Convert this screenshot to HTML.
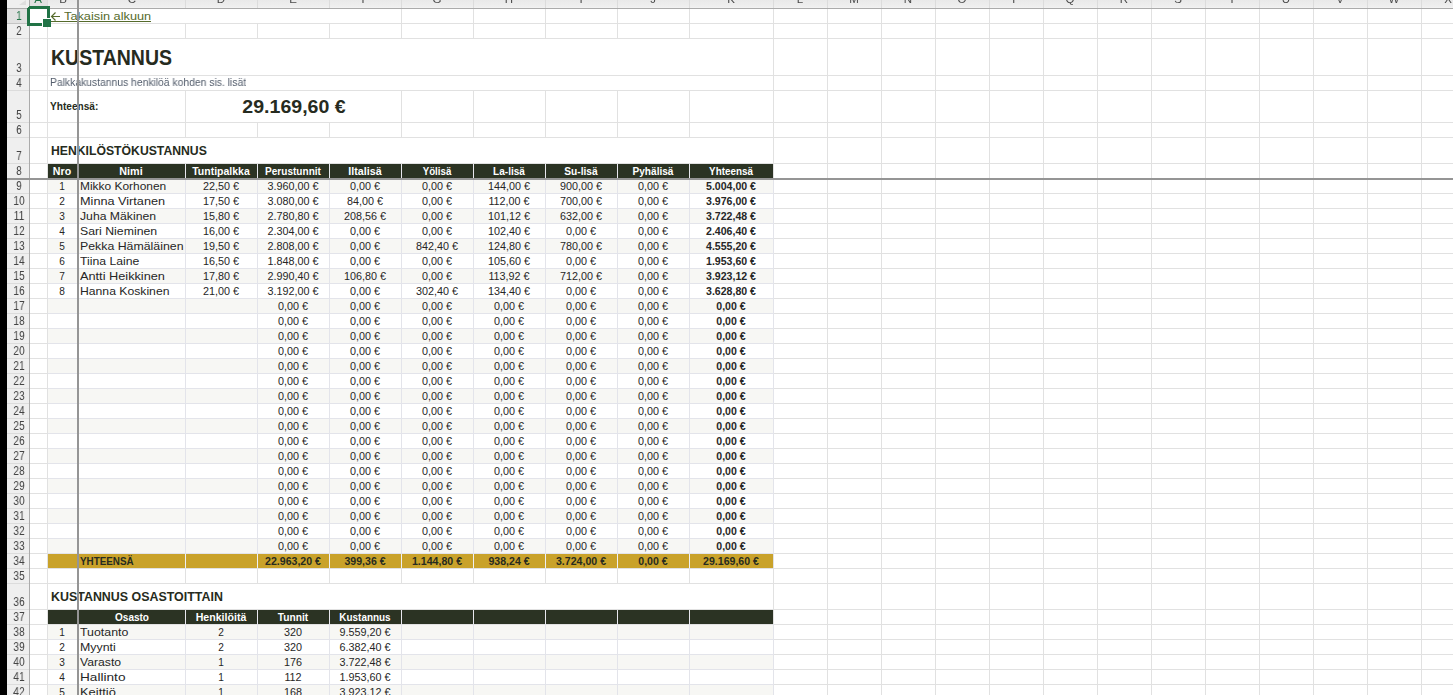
<!DOCTYPE html>
<html><head><meta charset="utf-8"><style>
html,body{margin:0;padding:0;}
body{width:1453px;height:695px;overflow:hidden;position:relative;background:#ffffff;font-family:"Liberation Sans",sans-serif;}
body>div{position:absolute;}
.t{white-space:nowrap;line-height:normal;}
</style></head><body>
<div style="left:47px;top:9px;width:1px;height:686px;background:#e1e1e1;"></div>
<div style="left:185px;top:9px;width:1px;height:686px;background:#e1e1e1;"></div>
<div style="left:257px;top:9px;width:1px;height:686px;background:#e1e1e1;"></div>
<div style="left:329px;top:9px;width:1px;height:686px;background:#e1e1e1;"></div>
<div style="left:401px;top:9px;width:1px;height:686px;background:#e1e1e1;"></div>
<div style="left:473px;top:9px;width:1px;height:686px;background:#e1e1e1;"></div>
<div style="left:545px;top:9px;width:1px;height:686px;background:#e1e1e1;"></div>
<div style="left:617px;top:9px;width:1px;height:686px;background:#e1e1e1;"></div>
<div style="left:689px;top:9px;width:1px;height:686px;background:#e1e1e1;"></div>
<div style="left:773px;top:9px;width:1px;height:686px;background:#e1e1e1;"></div>
<div style="left:827px;top:9px;width:1px;height:686px;background:#e1e1e1;"></div>
<div style="left:881px;top:9px;width:1px;height:686px;background:#e1e1e1;"></div>
<div style="left:935px;top:9px;width:1px;height:686px;background:#e1e1e1;"></div>
<div style="left:989px;top:9px;width:1px;height:686px;background:#e1e1e1;"></div>
<div style="left:1043px;top:9px;width:1px;height:686px;background:#e1e1e1;"></div>
<div style="left:1097px;top:9px;width:1px;height:686px;background:#e1e1e1;"></div>
<div style="left:1151px;top:9px;width:1px;height:686px;background:#e1e1e1;"></div>
<div style="left:1205px;top:9px;width:1px;height:686px;background:#e1e1e1;"></div>
<div style="left:1259px;top:9px;width:1px;height:686px;background:#e1e1e1;"></div>
<div style="left:1313px;top:9px;width:1px;height:686px;background:#e1e1e1;"></div>
<div style="left:1367px;top:9px;width:1px;height:686px;background:#e1e1e1;"></div>
<div style="left:1421px;top:9px;width:1px;height:686px;background:#e1e1e1;"></div>
<div style="left:1475px;top:9px;width:1px;height:686px;background:#e1e1e1;"></div>
<div style="left:30px;top:23px;width:1423px;height:1px;background:#e1e1e1;"></div>
<div style="left:30px;top:38px;width:1423px;height:1px;background:#e1e1e1;"></div>
<div style="left:30px;top:75px;width:1423px;height:1px;background:#e1e1e1;"></div>
<div style="left:30px;top:90px;width:1423px;height:1px;background:#e1e1e1;"></div>
<div style="left:30px;top:122px;width:1423px;height:1px;background:#e1e1e1;"></div>
<div style="left:30px;top:137px;width:1423px;height:1px;background:#e1e1e1;"></div>
<div style="left:30px;top:163px;width:1423px;height:1px;background:#e1e1e1;"></div>
<div style="left:30px;top:193px;width:1423px;height:1px;background:#e1e1e1;"></div>
<div style="left:30px;top:208px;width:1423px;height:1px;background:#e1e1e1;"></div>
<div style="left:30px;top:223px;width:1423px;height:1px;background:#e1e1e1;"></div>
<div style="left:30px;top:238px;width:1423px;height:1px;background:#e1e1e1;"></div>
<div style="left:30px;top:253px;width:1423px;height:1px;background:#e1e1e1;"></div>
<div style="left:30px;top:268px;width:1423px;height:1px;background:#e1e1e1;"></div>
<div style="left:30px;top:283px;width:1423px;height:1px;background:#e1e1e1;"></div>
<div style="left:30px;top:298px;width:1423px;height:1px;background:#e1e1e1;"></div>
<div style="left:30px;top:313px;width:1423px;height:1px;background:#e1e1e1;"></div>
<div style="left:30px;top:328px;width:1423px;height:1px;background:#e1e1e1;"></div>
<div style="left:30px;top:343px;width:1423px;height:1px;background:#e1e1e1;"></div>
<div style="left:30px;top:358px;width:1423px;height:1px;background:#e1e1e1;"></div>
<div style="left:30px;top:373px;width:1423px;height:1px;background:#e1e1e1;"></div>
<div style="left:30px;top:388px;width:1423px;height:1px;background:#e1e1e1;"></div>
<div style="left:30px;top:403px;width:1423px;height:1px;background:#e1e1e1;"></div>
<div style="left:30px;top:418px;width:1423px;height:1px;background:#e1e1e1;"></div>
<div style="left:30px;top:433px;width:1423px;height:1px;background:#e1e1e1;"></div>
<div style="left:30px;top:448px;width:1423px;height:1px;background:#e1e1e1;"></div>
<div style="left:30px;top:463px;width:1423px;height:1px;background:#e1e1e1;"></div>
<div style="left:30px;top:478px;width:1423px;height:1px;background:#e1e1e1;"></div>
<div style="left:30px;top:493px;width:1423px;height:1px;background:#e1e1e1;"></div>
<div style="left:30px;top:508px;width:1423px;height:1px;background:#e1e1e1;"></div>
<div style="left:30px;top:523px;width:1423px;height:1px;background:#e1e1e1;"></div>
<div style="left:30px;top:538px;width:1423px;height:1px;background:#e1e1e1;"></div>
<div style="left:30px;top:553px;width:1423px;height:1px;background:#e1e1e1;"></div>
<div style="left:30px;top:568px;width:1423px;height:1px;background:#e1e1e1;"></div>
<div style="left:30px;top:583px;width:1423px;height:1px;background:#e1e1e1;"></div>
<div style="left:30px;top:609px;width:1423px;height:1px;background:#e1e1e1;"></div>
<div style="left:30px;top:624px;width:1423px;height:1px;background:#e1e1e1;"></div>
<div style="left:30px;top:639px;width:1423px;height:1px;background:#e1e1e1;"></div>
<div style="left:30px;top:654px;width:1423px;height:1px;background:#e1e1e1;"></div>
<div style="left:30px;top:669px;width:1423px;height:1px;background:#e1e1e1;"></div>
<div style="left:30px;top:684px;width:1423px;height:1px;background:#e1e1e1;"></div>
<div style="left:30px;top:699px;width:1423px;height:1px;background:#e1e1e1;"></div>
<div style="left:30px;top:714px;width:1423px;height:1px;background:#e1e1e1;"></div>
<div style="left:48px;top:9px;width:353px;height:14px;background:#ffffff;"></div>
<div style="left:48px;top:39px;width:725px;height:36px;background:#ffffff;"></div>
<div style="left:48px;top:76px;width:725px;height:14px;background:#ffffff;"></div>
<div style="left:48px;top:91px;width:137px;height:31px;background:#ffffff;"></div>
<div style="left:186px;top:91px;width:215px;height:31px;background:#ffffff;"></div>
<div style="left:48px;top:138px;width:725px;height:25px;background:#ffffff;"></div>
<div style="left:48px;top:584px;width:725px;height:25px;background:#ffffff;"></div>
<div style="left:48px;top:164px;width:725px;height:14px;background:#2b3323;"></div>
<div style="left:78px;top:164px;width:1px;height:14px;background:#e8e8ee;"></div>
<div style="left:185px;top:164px;width:1px;height:14px;background:#e8e8ee;"></div>
<div style="left:257px;top:164px;width:1px;height:14px;background:#e8e8ee;"></div>
<div style="left:329px;top:164px;width:1px;height:14px;background:#e8e8ee;"></div>
<div style="left:401px;top:164px;width:1px;height:14px;background:#e8e8ee;"></div>
<div style="left:473px;top:164px;width:1px;height:14px;background:#e8e8ee;"></div>
<div style="left:545px;top:164px;width:1px;height:14px;background:#e8e8ee;"></div>
<div style="left:617px;top:164px;width:1px;height:14px;background:#e8e8ee;"></div>
<div style="left:689px;top:164px;width:1px;height:14px;background:#e8e8ee;"></div>
<div style="left:48px;top:610px;width:725px;height:14px;background:#2b3323;"></div>
<div style="left:78px;top:610px;width:1px;height:14px;background:#e8e8ee;"></div>
<div style="left:185px;top:610px;width:1px;height:14px;background:#e8e8ee;"></div>
<div style="left:257px;top:610px;width:1px;height:14px;background:#e8e8ee;"></div>
<div style="left:329px;top:610px;width:1px;height:14px;background:#e8e8ee;"></div>
<div style="left:401px;top:610px;width:1px;height:14px;background:#e8e8ee;"></div>
<div style="left:473px;top:610px;width:1px;height:14px;background:#e8e8ee;"></div>
<div style="left:545px;top:610px;width:1px;height:14px;background:#e8e8ee;"></div>
<div style="left:617px;top:610px;width:1px;height:14px;background:#e8e8ee;"></div>
<div style="left:689px;top:610px;width:1px;height:14px;background:#e8e8ee;"></div>
<div style="left:48px;top:179px;width:725px;height:14px;background:#f7f7f4;"></div>
<div style="left:185px;top:178px;width:1px;height:16px;background:#e3e4ea;"></div>
<div style="left:257px;top:178px;width:1px;height:16px;background:#e3e4ea;"></div>
<div style="left:329px;top:178px;width:1px;height:16px;background:#e3e4ea;"></div>
<div style="left:401px;top:178px;width:1px;height:16px;background:#e3e4ea;"></div>
<div style="left:473px;top:178px;width:1px;height:16px;background:#e3e4ea;"></div>
<div style="left:545px;top:178px;width:1px;height:16px;background:#e3e4ea;"></div>
<div style="left:617px;top:178px;width:1px;height:16px;background:#e3e4ea;"></div>
<div style="left:689px;top:178px;width:1px;height:16px;background:#e3e4ea;"></div>
<div style="left:773px;top:178px;width:1px;height:16px;background:#e3e4ea;"></div>
<div style="left:48px;top:193px;width:725px;height:1px;background:#e3e4ea;"></div>
<div style="left:48px;top:194px;width:725px;height:14px;background:#ffffff;"></div>
<div style="left:185px;top:193px;width:1px;height:16px;background:#e3e4ea;"></div>
<div style="left:257px;top:193px;width:1px;height:16px;background:#e3e4ea;"></div>
<div style="left:329px;top:193px;width:1px;height:16px;background:#e3e4ea;"></div>
<div style="left:401px;top:193px;width:1px;height:16px;background:#e3e4ea;"></div>
<div style="left:473px;top:193px;width:1px;height:16px;background:#e3e4ea;"></div>
<div style="left:545px;top:193px;width:1px;height:16px;background:#e3e4ea;"></div>
<div style="left:617px;top:193px;width:1px;height:16px;background:#e3e4ea;"></div>
<div style="left:689px;top:193px;width:1px;height:16px;background:#e3e4ea;"></div>
<div style="left:773px;top:193px;width:1px;height:16px;background:#e3e4ea;"></div>
<div style="left:48px;top:208px;width:725px;height:1px;background:#e3e4ea;"></div>
<div style="left:48px;top:209px;width:725px;height:14px;background:#f7f7f4;"></div>
<div style="left:185px;top:208px;width:1px;height:16px;background:#e3e4ea;"></div>
<div style="left:257px;top:208px;width:1px;height:16px;background:#e3e4ea;"></div>
<div style="left:329px;top:208px;width:1px;height:16px;background:#e3e4ea;"></div>
<div style="left:401px;top:208px;width:1px;height:16px;background:#e3e4ea;"></div>
<div style="left:473px;top:208px;width:1px;height:16px;background:#e3e4ea;"></div>
<div style="left:545px;top:208px;width:1px;height:16px;background:#e3e4ea;"></div>
<div style="left:617px;top:208px;width:1px;height:16px;background:#e3e4ea;"></div>
<div style="left:689px;top:208px;width:1px;height:16px;background:#e3e4ea;"></div>
<div style="left:773px;top:208px;width:1px;height:16px;background:#e3e4ea;"></div>
<div style="left:48px;top:223px;width:725px;height:1px;background:#e3e4ea;"></div>
<div style="left:48px;top:224px;width:725px;height:14px;background:#ffffff;"></div>
<div style="left:185px;top:223px;width:1px;height:16px;background:#e3e4ea;"></div>
<div style="left:257px;top:223px;width:1px;height:16px;background:#e3e4ea;"></div>
<div style="left:329px;top:223px;width:1px;height:16px;background:#e3e4ea;"></div>
<div style="left:401px;top:223px;width:1px;height:16px;background:#e3e4ea;"></div>
<div style="left:473px;top:223px;width:1px;height:16px;background:#e3e4ea;"></div>
<div style="left:545px;top:223px;width:1px;height:16px;background:#e3e4ea;"></div>
<div style="left:617px;top:223px;width:1px;height:16px;background:#e3e4ea;"></div>
<div style="left:689px;top:223px;width:1px;height:16px;background:#e3e4ea;"></div>
<div style="left:773px;top:223px;width:1px;height:16px;background:#e3e4ea;"></div>
<div style="left:48px;top:238px;width:725px;height:1px;background:#e3e4ea;"></div>
<div style="left:48px;top:239px;width:725px;height:14px;background:#f7f7f4;"></div>
<div style="left:185px;top:238px;width:1px;height:16px;background:#e3e4ea;"></div>
<div style="left:257px;top:238px;width:1px;height:16px;background:#e3e4ea;"></div>
<div style="left:329px;top:238px;width:1px;height:16px;background:#e3e4ea;"></div>
<div style="left:401px;top:238px;width:1px;height:16px;background:#e3e4ea;"></div>
<div style="left:473px;top:238px;width:1px;height:16px;background:#e3e4ea;"></div>
<div style="left:545px;top:238px;width:1px;height:16px;background:#e3e4ea;"></div>
<div style="left:617px;top:238px;width:1px;height:16px;background:#e3e4ea;"></div>
<div style="left:689px;top:238px;width:1px;height:16px;background:#e3e4ea;"></div>
<div style="left:773px;top:238px;width:1px;height:16px;background:#e3e4ea;"></div>
<div style="left:48px;top:253px;width:725px;height:1px;background:#e3e4ea;"></div>
<div style="left:48px;top:254px;width:725px;height:14px;background:#ffffff;"></div>
<div style="left:185px;top:253px;width:1px;height:16px;background:#e3e4ea;"></div>
<div style="left:257px;top:253px;width:1px;height:16px;background:#e3e4ea;"></div>
<div style="left:329px;top:253px;width:1px;height:16px;background:#e3e4ea;"></div>
<div style="left:401px;top:253px;width:1px;height:16px;background:#e3e4ea;"></div>
<div style="left:473px;top:253px;width:1px;height:16px;background:#e3e4ea;"></div>
<div style="left:545px;top:253px;width:1px;height:16px;background:#e3e4ea;"></div>
<div style="left:617px;top:253px;width:1px;height:16px;background:#e3e4ea;"></div>
<div style="left:689px;top:253px;width:1px;height:16px;background:#e3e4ea;"></div>
<div style="left:773px;top:253px;width:1px;height:16px;background:#e3e4ea;"></div>
<div style="left:48px;top:268px;width:725px;height:1px;background:#e3e4ea;"></div>
<div style="left:48px;top:269px;width:725px;height:14px;background:#f7f7f4;"></div>
<div style="left:185px;top:268px;width:1px;height:16px;background:#e3e4ea;"></div>
<div style="left:257px;top:268px;width:1px;height:16px;background:#e3e4ea;"></div>
<div style="left:329px;top:268px;width:1px;height:16px;background:#e3e4ea;"></div>
<div style="left:401px;top:268px;width:1px;height:16px;background:#e3e4ea;"></div>
<div style="left:473px;top:268px;width:1px;height:16px;background:#e3e4ea;"></div>
<div style="left:545px;top:268px;width:1px;height:16px;background:#e3e4ea;"></div>
<div style="left:617px;top:268px;width:1px;height:16px;background:#e3e4ea;"></div>
<div style="left:689px;top:268px;width:1px;height:16px;background:#e3e4ea;"></div>
<div style="left:773px;top:268px;width:1px;height:16px;background:#e3e4ea;"></div>
<div style="left:48px;top:283px;width:725px;height:1px;background:#e3e4ea;"></div>
<div style="left:48px;top:284px;width:725px;height:14px;background:#ffffff;"></div>
<div style="left:185px;top:283px;width:1px;height:16px;background:#e3e4ea;"></div>
<div style="left:257px;top:283px;width:1px;height:16px;background:#e3e4ea;"></div>
<div style="left:329px;top:283px;width:1px;height:16px;background:#e3e4ea;"></div>
<div style="left:401px;top:283px;width:1px;height:16px;background:#e3e4ea;"></div>
<div style="left:473px;top:283px;width:1px;height:16px;background:#e3e4ea;"></div>
<div style="left:545px;top:283px;width:1px;height:16px;background:#e3e4ea;"></div>
<div style="left:617px;top:283px;width:1px;height:16px;background:#e3e4ea;"></div>
<div style="left:689px;top:283px;width:1px;height:16px;background:#e3e4ea;"></div>
<div style="left:773px;top:283px;width:1px;height:16px;background:#e3e4ea;"></div>
<div style="left:48px;top:298px;width:725px;height:1px;background:#e3e4ea;"></div>
<div style="left:48px;top:299px;width:725px;height:14px;background:#f7f7f4;"></div>
<div style="left:185px;top:298px;width:1px;height:16px;background:#e3e4ea;"></div>
<div style="left:257px;top:298px;width:1px;height:16px;background:#e3e4ea;"></div>
<div style="left:329px;top:298px;width:1px;height:16px;background:#e3e4ea;"></div>
<div style="left:401px;top:298px;width:1px;height:16px;background:#e3e4ea;"></div>
<div style="left:473px;top:298px;width:1px;height:16px;background:#e3e4ea;"></div>
<div style="left:545px;top:298px;width:1px;height:16px;background:#e3e4ea;"></div>
<div style="left:617px;top:298px;width:1px;height:16px;background:#e3e4ea;"></div>
<div style="left:689px;top:298px;width:1px;height:16px;background:#e3e4ea;"></div>
<div style="left:773px;top:298px;width:1px;height:16px;background:#e3e4ea;"></div>
<div style="left:48px;top:313px;width:725px;height:1px;background:#e3e4ea;"></div>
<div style="left:48px;top:314px;width:725px;height:14px;background:#ffffff;"></div>
<div style="left:185px;top:313px;width:1px;height:16px;background:#e3e4ea;"></div>
<div style="left:257px;top:313px;width:1px;height:16px;background:#e3e4ea;"></div>
<div style="left:329px;top:313px;width:1px;height:16px;background:#e3e4ea;"></div>
<div style="left:401px;top:313px;width:1px;height:16px;background:#e3e4ea;"></div>
<div style="left:473px;top:313px;width:1px;height:16px;background:#e3e4ea;"></div>
<div style="left:545px;top:313px;width:1px;height:16px;background:#e3e4ea;"></div>
<div style="left:617px;top:313px;width:1px;height:16px;background:#e3e4ea;"></div>
<div style="left:689px;top:313px;width:1px;height:16px;background:#e3e4ea;"></div>
<div style="left:773px;top:313px;width:1px;height:16px;background:#e3e4ea;"></div>
<div style="left:48px;top:328px;width:725px;height:1px;background:#e3e4ea;"></div>
<div style="left:48px;top:329px;width:725px;height:14px;background:#f7f7f4;"></div>
<div style="left:185px;top:328px;width:1px;height:16px;background:#e3e4ea;"></div>
<div style="left:257px;top:328px;width:1px;height:16px;background:#e3e4ea;"></div>
<div style="left:329px;top:328px;width:1px;height:16px;background:#e3e4ea;"></div>
<div style="left:401px;top:328px;width:1px;height:16px;background:#e3e4ea;"></div>
<div style="left:473px;top:328px;width:1px;height:16px;background:#e3e4ea;"></div>
<div style="left:545px;top:328px;width:1px;height:16px;background:#e3e4ea;"></div>
<div style="left:617px;top:328px;width:1px;height:16px;background:#e3e4ea;"></div>
<div style="left:689px;top:328px;width:1px;height:16px;background:#e3e4ea;"></div>
<div style="left:773px;top:328px;width:1px;height:16px;background:#e3e4ea;"></div>
<div style="left:48px;top:343px;width:725px;height:1px;background:#e3e4ea;"></div>
<div style="left:48px;top:344px;width:725px;height:14px;background:#ffffff;"></div>
<div style="left:185px;top:343px;width:1px;height:16px;background:#e3e4ea;"></div>
<div style="left:257px;top:343px;width:1px;height:16px;background:#e3e4ea;"></div>
<div style="left:329px;top:343px;width:1px;height:16px;background:#e3e4ea;"></div>
<div style="left:401px;top:343px;width:1px;height:16px;background:#e3e4ea;"></div>
<div style="left:473px;top:343px;width:1px;height:16px;background:#e3e4ea;"></div>
<div style="left:545px;top:343px;width:1px;height:16px;background:#e3e4ea;"></div>
<div style="left:617px;top:343px;width:1px;height:16px;background:#e3e4ea;"></div>
<div style="left:689px;top:343px;width:1px;height:16px;background:#e3e4ea;"></div>
<div style="left:773px;top:343px;width:1px;height:16px;background:#e3e4ea;"></div>
<div style="left:48px;top:358px;width:725px;height:1px;background:#e3e4ea;"></div>
<div style="left:48px;top:359px;width:725px;height:14px;background:#f7f7f4;"></div>
<div style="left:185px;top:358px;width:1px;height:16px;background:#e3e4ea;"></div>
<div style="left:257px;top:358px;width:1px;height:16px;background:#e3e4ea;"></div>
<div style="left:329px;top:358px;width:1px;height:16px;background:#e3e4ea;"></div>
<div style="left:401px;top:358px;width:1px;height:16px;background:#e3e4ea;"></div>
<div style="left:473px;top:358px;width:1px;height:16px;background:#e3e4ea;"></div>
<div style="left:545px;top:358px;width:1px;height:16px;background:#e3e4ea;"></div>
<div style="left:617px;top:358px;width:1px;height:16px;background:#e3e4ea;"></div>
<div style="left:689px;top:358px;width:1px;height:16px;background:#e3e4ea;"></div>
<div style="left:773px;top:358px;width:1px;height:16px;background:#e3e4ea;"></div>
<div style="left:48px;top:373px;width:725px;height:1px;background:#e3e4ea;"></div>
<div style="left:48px;top:374px;width:725px;height:14px;background:#ffffff;"></div>
<div style="left:185px;top:373px;width:1px;height:16px;background:#e3e4ea;"></div>
<div style="left:257px;top:373px;width:1px;height:16px;background:#e3e4ea;"></div>
<div style="left:329px;top:373px;width:1px;height:16px;background:#e3e4ea;"></div>
<div style="left:401px;top:373px;width:1px;height:16px;background:#e3e4ea;"></div>
<div style="left:473px;top:373px;width:1px;height:16px;background:#e3e4ea;"></div>
<div style="left:545px;top:373px;width:1px;height:16px;background:#e3e4ea;"></div>
<div style="left:617px;top:373px;width:1px;height:16px;background:#e3e4ea;"></div>
<div style="left:689px;top:373px;width:1px;height:16px;background:#e3e4ea;"></div>
<div style="left:773px;top:373px;width:1px;height:16px;background:#e3e4ea;"></div>
<div style="left:48px;top:388px;width:725px;height:1px;background:#e3e4ea;"></div>
<div style="left:48px;top:389px;width:725px;height:14px;background:#f7f7f4;"></div>
<div style="left:185px;top:388px;width:1px;height:16px;background:#e3e4ea;"></div>
<div style="left:257px;top:388px;width:1px;height:16px;background:#e3e4ea;"></div>
<div style="left:329px;top:388px;width:1px;height:16px;background:#e3e4ea;"></div>
<div style="left:401px;top:388px;width:1px;height:16px;background:#e3e4ea;"></div>
<div style="left:473px;top:388px;width:1px;height:16px;background:#e3e4ea;"></div>
<div style="left:545px;top:388px;width:1px;height:16px;background:#e3e4ea;"></div>
<div style="left:617px;top:388px;width:1px;height:16px;background:#e3e4ea;"></div>
<div style="left:689px;top:388px;width:1px;height:16px;background:#e3e4ea;"></div>
<div style="left:773px;top:388px;width:1px;height:16px;background:#e3e4ea;"></div>
<div style="left:48px;top:403px;width:725px;height:1px;background:#e3e4ea;"></div>
<div style="left:48px;top:404px;width:725px;height:14px;background:#ffffff;"></div>
<div style="left:185px;top:403px;width:1px;height:16px;background:#e3e4ea;"></div>
<div style="left:257px;top:403px;width:1px;height:16px;background:#e3e4ea;"></div>
<div style="left:329px;top:403px;width:1px;height:16px;background:#e3e4ea;"></div>
<div style="left:401px;top:403px;width:1px;height:16px;background:#e3e4ea;"></div>
<div style="left:473px;top:403px;width:1px;height:16px;background:#e3e4ea;"></div>
<div style="left:545px;top:403px;width:1px;height:16px;background:#e3e4ea;"></div>
<div style="left:617px;top:403px;width:1px;height:16px;background:#e3e4ea;"></div>
<div style="left:689px;top:403px;width:1px;height:16px;background:#e3e4ea;"></div>
<div style="left:773px;top:403px;width:1px;height:16px;background:#e3e4ea;"></div>
<div style="left:48px;top:418px;width:725px;height:1px;background:#e3e4ea;"></div>
<div style="left:48px;top:419px;width:725px;height:14px;background:#f7f7f4;"></div>
<div style="left:185px;top:418px;width:1px;height:16px;background:#e3e4ea;"></div>
<div style="left:257px;top:418px;width:1px;height:16px;background:#e3e4ea;"></div>
<div style="left:329px;top:418px;width:1px;height:16px;background:#e3e4ea;"></div>
<div style="left:401px;top:418px;width:1px;height:16px;background:#e3e4ea;"></div>
<div style="left:473px;top:418px;width:1px;height:16px;background:#e3e4ea;"></div>
<div style="left:545px;top:418px;width:1px;height:16px;background:#e3e4ea;"></div>
<div style="left:617px;top:418px;width:1px;height:16px;background:#e3e4ea;"></div>
<div style="left:689px;top:418px;width:1px;height:16px;background:#e3e4ea;"></div>
<div style="left:773px;top:418px;width:1px;height:16px;background:#e3e4ea;"></div>
<div style="left:48px;top:433px;width:725px;height:1px;background:#e3e4ea;"></div>
<div style="left:48px;top:434px;width:725px;height:14px;background:#ffffff;"></div>
<div style="left:185px;top:433px;width:1px;height:16px;background:#e3e4ea;"></div>
<div style="left:257px;top:433px;width:1px;height:16px;background:#e3e4ea;"></div>
<div style="left:329px;top:433px;width:1px;height:16px;background:#e3e4ea;"></div>
<div style="left:401px;top:433px;width:1px;height:16px;background:#e3e4ea;"></div>
<div style="left:473px;top:433px;width:1px;height:16px;background:#e3e4ea;"></div>
<div style="left:545px;top:433px;width:1px;height:16px;background:#e3e4ea;"></div>
<div style="left:617px;top:433px;width:1px;height:16px;background:#e3e4ea;"></div>
<div style="left:689px;top:433px;width:1px;height:16px;background:#e3e4ea;"></div>
<div style="left:773px;top:433px;width:1px;height:16px;background:#e3e4ea;"></div>
<div style="left:48px;top:448px;width:725px;height:1px;background:#e3e4ea;"></div>
<div style="left:48px;top:449px;width:725px;height:14px;background:#f7f7f4;"></div>
<div style="left:185px;top:448px;width:1px;height:16px;background:#e3e4ea;"></div>
<div style="left:257px;top:448px;width:1px;height:16px;background:#e3e4ea;"></div>
<div style="left:329px;top:448px;width:1px;height:16px;background:#e3e4ea;"></div>
<div style="left:401px;top:448px;width:1px;height:16px;background:#e3e4ea;"></div>
<div style="left:473px;top:448px;width:1px;height:16px;background:#e3e4ea;"></div>
<div style="left:545px;top:448px;width:1px;height:16px;background:#e3e4ea;"></div>
<div style="left:617px;top:448px;width:1px;height:16px;background:#e3e4ea;"></div>
<div style="left:689px;top:448px;width:1px;height:16px;background:#e3e4ea;"></div>
<div style="left:773px;top:448px;width:1px;height:16px;background:#e3e4ea;"></div>
<div style="left:48px;top:463px;width:725px;height:1px;background:#e3e4ea;"></div>
<div style="left:48px;top:464px;width:725px;height:14px;background:#ffffff;"></div>
<div style="left:185px;top:463px;width:1px;height:16px;background:#e3e4ea;"></div>
<div style="left:257px;top:463px;width:1px;height:16px;background:#e3e4ea;"></div>
<div style="left:329px;top:463px;width:1px;height:16px;background:#e3e4ea;"></div>
<div style="left:401px;top:463px;width:1px;height:16px;background:#e3e4ea;"></div>
<div style="left:473px;top:463px;width:1px;height:16px;background:#e3e4ea;"></div>
<div style="left:545px;top:463px;width:1px;height:16px;background:#e3e4ea;"></div>
<div style="left:617px;top:463px;width:1px;height:16px;background:#e3e4ea;"></div>
<div style="left:689px;top:463px;width:1px;height:16px;background:#e3e4ea;"></div>
<div style="left:773px;top:463px;width:1px;height:16px;background:#e3e4ea;"></div>
<div style="left:48px;top:478px;width:725px;height:1px;background:#e3e4ea;"></div>
<div style="left:48px;top:479px;width:725px;height:14px;background:#f7f7f4;"></div>
<div style="left:185px;top:478px;width:1px;height:16px;background:#e3e4ea;"></div>
<div style="left:257px;top:478px;width:1px;height:16px;background:#e3e4ea;"></div>
<div style="left:329px;top:478px;width:1px;height:16px;background:#e3e4ea;"></div>
<div style="left:401px;top:478px;width:1px;height:16px;background:#e3e4ea;"></div>
<div style="left:473px;top:478px;width:1px;height:16px;background:#e3e4ea;"></div>
<div style="left:545px;top:478px;width:1px;height:16px;background:#e3e4ea;"></div>
<div style="left:617px;top:478px;width:1px;height:16px;background:#e3e4ea;"></div>
<div style="left:689px;top:478px;width:1px;height:16px;background:#e3e4ea;"></div>
<div style="left:773px;top:478px;width:1px;height:16px;background:#e3e4ea;"></div>
<div style="left:48px;top:493px;width:725px;height:1px;background:#e3e4ea;"></div>
<div style="left:48px;top:494px;width:725px;height:14px;background:#ffffff;"></div>
<div style="left:185px;top:493px;width:1px;height:16px;background:#e3e4ea;"></div>
<div style="left:257px;top:493px;width:1px;height:16px;background:#e3e4ea;"></div>
<div style="left:329px;top:493px;width:1px;height:16px;background:#e3e4ea;"></div>
<div style="left:401px;top:493px;width:1px;height:16px;background:#e3e4ea;"></div>
<div style="left:473px;top:493px;width:1px;height:16px;background:#e3e4ea;"></div>
<div style="left:545px;top:493px;width:1px;height:16px;background:#e3e4ea;"></div>
<div style="left:617px;top:493px;width:1px;height:16px;background:#e3e4ea;"></div>
<div style="left:689px;top:493px;width:1px;height:16px;background:#e3e4ea;"></div>
<div style="left:773px;top:493px;width:1px;height:16px;background:#e3e4ea;"></div>
<div style="left:48px;top:508px;width:725px;height:1px;background:#e3e4ea;"></div>
<div style="left:48px;top:509px;width:725px;height:14px;background:#f7f7f4;"></div>
<div style="left:185px;top:508px;width:1px;height:16px;background:#e3e4ea;"></div>
<div style="left:257px;top:508px;width:1px;height:16px;background:#e3e4ea;"></div>
<div style="left:329px;top:508px;width:1px;height:16px;background:#e3e4ea;"></div>
<div style="left:401px;top:508px;width:1px;height:16px;background:#e3e4ea;"></div>
<div style="left:473px;top:508px;width:1px;height:16px;background:#e3e4ea;"></div>
<div style="left:545px;top:508px;width:1px;height:16px;background:#e3e4ea;"></div>
<div style="left:617px;top:508px;width:1px;height:16px;background:#e3e4ea;"></div>
<div style="left:689px;top:508px;width:1px;height:16px;background:#e3e4ea;"></div>
<div style="left:773px;top:508px;width:1px;height:16px;background:#e3e4ea;"></div>
<div style="left:48px;top:523px;width:725px;height:1px;background:#e3e4ea;"></div>
<div style="left:48px;top:524px;width:725px;height:14px;background:#ffffff;"></div>
<div style="left:185px;top:523px;width:1px;height:16px;background:#e3e4ea;"></div>
<div style="left:257px;top:523px;width:1px;height:16px;background:#e3e4ea;"></div>
<div style="left:329px;top:523px;width:1px;height:16px;background:#e3e4ea;"></div>
<div style="left:401px;top:523px;width:1px;height:16px;background:#e3e4ea;"></div>
<div style="left:473px;top:523px;width:1px;height:16px;background:#e3e4ea;"></div>
<div style="left:545px;top:523px;width:1px;height:16px;background:#e3e4ea;"></div>
<div style="left:617px;top:523px;width:1px;height:16px;background:#e3e4ea;"></div>
<div style="left:689px;top:523px;width:1px;height:16px;background:#e3e4ea;"></div>
<div style="left:773px;top:523px;width:1px;height:16px;background:#e3e4ea;"></div>
<div style="left:48px;top:538px;width:725px;height:1px;background:#e3e4ea;"></div>
<div style="left:48px;top:539px;width:725px;height:14px;background:#f7f7f4;"></div>
<div style="left:185px;top:538px;width:1px;height:16px;background:#e3e4ea;"></div>
<div style="left:257px;top:538px;width:1px;height:16px;background:#e3e4ea;"></div>
<div style="left:329px;top:538px;width:1px;height:16px;background:#e3e4ea;"></div>
<div style="left:401px;top:538px;width:1px;height:16px;background:#e3e4ea;"></div>
<div style="left:473px;top:538px;width:1px;height:16px;background:#e3e4ea;"></div>
<div style="left:545px;top:538px;width:1px;height:16px;background:#e3e4ea;"></div>
<div style="left:617px;top:538px;width:1px;height:16px;background:#e3e4ea;"></div>
<div style="left:689px;top:538px;width:1px;height:16px;background:#e3e4ea;"></div>
<div style="left:773px;top:538px;width:1px;height:16px;background:#e3e4ea;"></div>
<div style="left:48px;top:553px;width:725px;height:1px;background:#e3e4ea;"></div>
<div style="left:48px;top:625px;width:725px;height:14px;background:#f7f7f4;"></div>
<div style="left:185px;top:624px;width:1px;height:16px;background:#e3e4ea;"></div>
<div style="left:257px;top:624px;width:1px;height:16px;background:#e3e4ea;"></div>
<div style="left:329px;top:624px;width:1px;height:16px;background:#e3e4ea;"></div>
<div style="left:401px;top:624px;width:1px;height:16px;background:#e3e4ea;"></div>
<div style="left:473px;top:624px;width:1px;height:16px;background:#e3e4ea;"></div>
<div style="left:545px;top:624px;width:1px;height:16px;background:#e3e4ea;"></div>
<div style="left:617px;top:624px;width:1px;height:16px;background:#e3e4ea;"></div>
<div style="left:689px;top:624px;width:1px;height:16px;background:#e3e4ea;"></div>
<div style="left:773px;top:624px;width:1px;height:16px;background:#e3e4ea;"></div>
<div style="left:48px;top:639px;width:725px;height:1px;background:#e3e4ea;"></div>
<div style="left:48px;top:640px;width:725px;height:14px;background:#ffffff;"></div>
<div style="left:185px;top:639px;width:1px;height:16px;background:#e3e4ea;"></div>
<div style="left:257px;top:639px;width:1px;height:16px;background:#e3e4ea;"></div>
<div style="left:329px;top:639px;width:1px;height:16px;background:#e3e4ea;"></div>
<div style="left:401px;top:639px;width:1px;height:16px;background:#e3e4ea;"></div>
<div style="left:473px;top:639px;width:1px;height:16px;background:#e3e4ea;"></div>
<div style="left:545px;top:639px;width:1px;height:16px;background:#e3e4ea;"></div>
<div style="left:617px;top:639px;width:1px;height:16px;background:#e3e4ea;"></div>
<div style="left:689px;top:639px;width:1px;height:16px;background:#e3e4ea;"></div>
<div style="left:773px;top:639px;width:1px;height:16px;background:#e3e4ea;"></div>
<div style="left:48px;top:654px;width:725px;height:1px;background:#e3e4ea;"></div>
<div style="left:48px;top:655px;width:725px;height:14px;background:#f7f7f4;"></div>
<div style="left:185px;top:654px;width:1px;height:16px;background:#e3e4ea;"></div>
<div style="left:257px;top:654px;width:1px;height:16px;background:#e3e4ea;"></div>
<div style="left:329px;top:654px;width:1px;height:16px;background:#e3e4ea;"></div>
<div style="left:401px;top:654px;width:1px;height:16px;background:#e3e4ea;"></div>
<div style="left:473px;top:654px;width:1px;height:16px;background:#e3e4ea;"></div>
<div style="left:545px;top:654px;width:1px;height:16px;background:#e3e4ea;"></div>
<div style="left:617px;top:654px;width:1px;height:16px;background:#e3e4ea;"></div>
<div style="left:689px;top:654px;width:1px;height:16px;background:#e3e4ea;"></div>
<div style="left:773px;top:654px;width:1px;height:16px;background:#e3e4ea;"></div>
<div style="left:48px;top:669px;width:725px;height:1px;background:#e3e4ea;"></div>
<div style="left:48px;top:670px;width:725px;height:14px;background:#ffffff;"></div>
<div style="left:185px;top:669px;width:1px;height:16px;background:#e3e4ea;"></div>
<div style="left:257px;top:669px;width:1px;height:16px;background:#e3e4ea;"></div>
<div style="left:329px;top:669px;width:1px;height:16px;background:#e3e4ea;"></div>
<div style="left:401px;top:669px;width:1px;height:16px;background:#e3e4ea;"></div>
<div style="left:473px;top:669px;width:1px;height:16px;background:#e3e4ea;"></div>
<div style="left:545px;top:669px;width:1px;height:16px;background:#e3e4ea;"></div>
<div style="left:617px;top:669px;width:1px;height:16px;background:#e3e4ea;"></div>
<div style="left:689px;top:669px;width:1px;height:16px;background:#e3e4ea;"></div>
<div style="left:773px;top:669px;width:1px;height:16px;background:#e3e4ea;"></div>
<div style="left:48px;top:684px;width:725px;height:1px;background:#e3e4ea;"></div>
<div style="left:48px;top:685px;width:725px;height:14px;background:#f7f7f4;"></div>
<div style="left:185px;top:684px;width:1px;height:16px;background:#e3e4ea;"></div>
<div style="left:257px;top:684px;width:1px;height:16px;background:#e3e4ea;"></div>
<div style="left:329px;top:684px;width:1px;height:16px;background:#e3e4ea;"></div>
<div style="left:401px;top:684px;width:1px;height:16px;background:#e3e4ea;"></div>
<div style="left:473px;top:684px;width:1px;height:16px;background:#e3e4ea;"></div>
<div style="left:545px;top:684px;width:1px;height:16px;background:#e3e4ea;"></div>
<div style="left:617px;top:684px;width:1px;height:16px;background:#e3e4ea;"></div>
<div style="left:689px;top:684px;width:1px;height:16px;background:#e3e4ea;"></div>
<div style="left:773px;top:684px;width:1px;height:16px;background:#e3e4ea;"></div>
<div style="left:48px;top:699px;width:725px;height:1px;background:#e3e4ea;"></div>
<div style="left:48px;top:700px;width:725px;height:14px;background:#ffffff;"></div>
<div style="left:185px;top:699px;width:1px;height:16px;background:#e3e4ea;"></div>
<div style="left:257px;top:699px;width:1px;height:16px;background:#e3e4ea;"></div>
<div style="left:329px;top:699px;width:1px;height:16px;background:#e3e4ea;"></div>
<div style="left:401px;top:699px;width:1px;height:16px;background:#e3e4ea;"></div>
<div style="left:473px;top:699px;width:1px;height:16px;background:#e3e4ea;"></div>
<div style="left:545px;top:699px;width:1px;height:16px;background:#e3e4ea;"></div>
<div style="left:617px;top:699px;width:1px;height:16px;background:#e3e4ea;"></div>
<div style="left:689px;top:699px;width:1px;height:16px;background:#e3e4ea;"></div>
<div style="left:773px;top:699px;width:1px;height:16px;background:#e3e4ea;"></div>
<div style="left:48px;top:714px;width:725px;height:1px;background:#e3e4ea;"></div>
<div style="left:48px;top:554px;width:725px;height:14px;background:#c9a22a;"></div>
<div style="left:185px;top:554px;width:1px;height:14px;background:#eef0f4;"></div>
<div style="left:257px;top:554px;width:1px;height:14px;background:#eef0f4;"></div>
<div style="left:329px;top:554px;width:1px;height:14px;background:#eef0f4;"></div>
<div style="left:401px;top:554px;width:1px;height:14px;background:#eef0f4;"></div>
<div style="left:473px;top:554px;width:1px;height:14px;background:#eef0f4;"></div>
<div style="left:545px;top:554px;width:1px;height:14px;background:#eef0f4;"></div>
<div style="left:617px;top:554px;width:1px;height:14px;background:#eef0f4;"></div>
<div style="left:689px;top:554px;width:1px;height:14px;background:#eef0f4;"></div>
<div class="t" style="left:64px;top:9.30px;font-size:11.6px;font-weight:normal;color:#566b2c;transform:scaleX(1.1);transform-origin:0 0;">Takaisin alkuun</div>
<svg style="position:absolute;left:0;top:0" width="80" height="30"><path d="M55.5 12.5 L51.5 16.5 L55.5 20.5 M51.5 16.5 H60" fill="none" stroke="#566b2c" stroke-width="1.15"/></svg>
<div style="left:50px;top:21px;width:101px;height:1px;background:#566b2c;"></div>
<div class="t" style="left:51px;top:45.07px;font-size:21.8px;font-weight:bold;color:#262b20;transform:scaleX(0.895);transform-origin:0 0;">KUSTANNUS</div>
<div class="t" style="left:50px;top:75.93px;font-size:10.8px;font-weight:normal;color:#535d6c;transform:scaleX(0.958);transform-origin:0 0;will-change:transform;">Palkkakustannus henkilöä kohden sis. lisät</div>
<div class="t" style="left:49.5px;top:98.90px;font-size:11.6px;font-weight:bold;color:#262b20;transform:scaleX(0.872);transform-origin:0 0;">Yhteensä:</div>
<div class="t" style="left:294.4px;top:95.87px;font-size:18.6px;font-weight:bold;color:#262b20;transform:translateX(-50%) scaleX(1.052);transform-origin:50% 0;">29.169,60 €</div>
<div class="t" style="left:50.6px;top:143.27px;font-size:13.4px;font-weight:bold;color:#262b20;transform:scaleX(0.912);transform-origin:0 0;">HENKILÖSTÖKUSTANNUS</div>
<div class="t" style="left:62.0px;top:164.30px;font-size:11.6px;font-weight:bold;color:#ffffff;transform:translateX(-50%) scaleX(0.915);transform-origin:50% 0;">Nro</div>
<div class="t" style="left:131.3px;top:164.30px;font-size:11.6px;font-weight:bold;color:#ffffff;transform:translateX(-50%) scaleX(0.931);transform-origin:50% 0;">Nimi</div>
<div class="t" style="left:221.0px;top:164.30px;font-size:11.6px;font-weight:bold;color:#ffffff;transform:translateX(-50%) scaleX(0.905);transform-origin:50% 0;">Tuntipalkka</div>
<div class="t" style="left:293.0px;top:164.30px;font-size:11.6px;font-weight:bold;color:#ffffff;transform:translateX(-50%) scaleX(0.867);transform-origin:50% 0;">Perustunnit</div>
<div class="t" style="left:365.0px;top:164.30px;font-size:11.6px;font-weight:bold;color:#ffffff;transform:translateX(-50%) scaleX(0.924);transform-origin:50% 0;">Iltalisä</div>
<div class="t" style="left:437.0px;top:164.30px;font-size:11.6px;font-weight:bold;color:#ffffff;transform:translateX(-50%) scaleX(0.839);transform-origin:50% 0;">Yölisä</div>
<div class="t" style="left:509.0px;top:164.30px;font-size:11.6px;font-weight:bold;color:#ffffff;transform:translateX(-50%) scaleX(0.866);transform-origin:50% 0;">La-lisä</div>
<div class="t" style="left:581.0px;top:164.30px;font-size:11.6px;font-weight:bold;color:#ffffff;transform:translateX(-50%) scaleX(0.879);transform-origin:50% 0;">Su-lisä</div>
<div class="t" style="left:653.0px;top:164.30px;font-size:11.6px;font-weight:bold;color:#ffffff;transform:translateX(-50%) scaleX(0.87);transform-origin:50% 0;">Pyhälisä</div>
<div class="t" style="left:731.0px;top:164.30px;font-size:11.6px;font-weight:bold;color:#ffffff;transform:translateX(-50%) scaleX(0.851);transform-origin:50% 0;">Yhteensä</div>
<div class="t" style="left:61.9px;top:179.20px;font-size:11.6px;font-weight:normal;color:#262626;transform:translateX(-50%) scaleX(0.87);transform-origin:50% 0;">1</div>
<div class="t" style="left:80.3px;top:180.18px;font-size:11.4px;font-weight:normal;color:#262626;transform:scaleX(1.048);transform-origin:0 0;">Mikko Korhonen</div>
<div class="t" style="left:221.0px;top:179.84px;font-size:10.9px;font-weight:normal;color:#262626;transform:translateX(-50%) scaleX(0.99);transform-origin:50% 0;">22,50 €</div>
<div class="t" style="left:293.0px;top:179.84px;font-size:10.9px;font-weight:normal;color:#262626;transform:translateX(-50%) scaleX(0.99);transform-origin:50% 0;">3.960,00 €</div>
<div class="t" style="left:365.0px;top:179.84px;font-size:10.9px;font-weight:normal;color:#262626;transform:translateX(-50%) scaleX(0.99);transform-origin:50% 0;">0,00 €</div>
<div class="t" style="left:437.0px;top:179.84px;font-size:10.9px;font-weight:normal;color:#262626;transform:translateX(-50%) scaleX(0.99);transform-origin:50% 0;">0,00 €</div>
<div class="t" style="left:509.0px;top:179.84px;font-size:10.9px;font-weight:normal;color:#262626;transform:translateX(-50%) scaleX(0.99);transform-origin:50% 0;">144,00 €</div>
<div class="t" style="left:581.0px;top:179.84px;font-size:10.9px;font-weight:normal;color:#262626;transform:translateX(-50%) scaleX(0.99);transform-origin:50% 0;">900,00 €</div>
<div class="t" style="left:653.0px;top:179.84px;font-size:10.9px;font-weight:normal;color:#262626;transform:translateX(-50%) scaleX(0.99);transform-origin:50% 0;">0,00 €</div>
<div class="t" style="left:731.0px;top:179.84px;font-size:10.9px;font-weight:bold;color:#262626;transform:translateX(-50%) scaleX(0.97);transform-origin:50% 0;">5.004,00 €</div>
<div class="t" style="left:61.9px;top:194.20px;font-size:11.6px;font-weight:normal;color:#262626;transform:translateX(-50%) scaleX(0.87);transform-origin:50% 0;">2</div>
<div class="t" style="left:80.3px;top:195.18px;font-size:11.4px;font-weight:normal;color:#262626;transform:scaleX(1.113);transform-origin:0 0;">Minna Virtanen</div>
<div class="t" style="left:221.0px;top:194.84px;font-size:10.9px;font-weight:normal;color:#262626;transform:translateX(-50%) scaleX(0.99);transform-origin:50% 0;">17,50 €</div>
<div class="t" style="left:293.0px;top:194.84px;font-size:10.9px;font-weight:normal;color:#262626;transform:translateX(-50%) scaleX(0.99);transform-origin:50% 0;">3.080,00 €</div>
<div class="t" style="left:365.0px;top:194.84px;font-size:10.9px;font-weight:normal;color:#262626;transform:translateX(-50%) scaleX(0.99);transform-origin:50% 0;">84,00 €</div>
<div class="t" style="left:437.0px;top:194.84px;font-size:10.9px;font-weight:normal;color:#262626;transform:translateX(-50%) scaleX(0.99);transform-origin:50% 0;">0,00 €</div>
<div class="t" style="left:509.0px;top:194.84px;font-size:10.9px;font-weight:normal;color:#262626;transform:translateX(-50%) scaleX(0.99);transform-origin:50% 0;">112,00 €</div>
<div class="t" style="left:581.0px;top:194.84px;font-size:10.9px;font-weight:normal;color:#262626;transform:translateX(-50%) scaleX(0.99);transform-origin:50% 0;">700,00 €</div>
<div class="t" style="left:653.0px;top:194.84px;font-size:10.9px;font-weight:normal;color:#262626;transform:translateX(-50%) scaleX(0.99);transform-origin:50% 0;">0,00 €</div>
<div class="t" style="left:731.0px;top:194.84px;font-size:10.9px;font-weight:bold;color:#262626;transform:translateX(-50%) scaleX(0.97);transform-origin:50% 0;">3.976,00 €</div>
<div class="t" style="left:61.9px;top:209.20px;font-size:11.6px;font-weight:normal;color:#262626;transform:translateX(-50%) scaleX(0.87);transform-origin:50% 0;">3</div>
<div class="t" style="left:80.3px;top:210.18px;font-size:11.4px;font-weight:normal;color:#262626;transform:scaleX(1.072);transform-origin:0 0;">Juha Mäkinen</div>
<div class="t" style="left:221.0px;top:209.84px;font-size:10.9px;font-weight:normal;color:#262626;transform:translateX(-50%) scaleX(0.99);transform-origin:50% 0;">15,80 €</div>
<div class="t" style="left:293.0px;top:209.84px;font-size:10.9px;font-weight:normal;color:#262626;transform:translateX(-50%) scaleX(0.99);transform-origin:50% 0;">2.780,80 €</div>
<div class="t" style="left:365.0px;top:209.84px;font-size:10.9px;font-weight:normal;color:#262626;transform:translateX(-50%) scaleX(0.99);transform-origin:50% 0;">208,56 €</div>
<div class="t" style="left:437.0px;top:209.84px;font-size:10.9px;font-weight:normal;color:#262626;transform:translateX(-50%) scaleX(0.99);transform-origin:50% 0;">0,00 €</div>
<div class="t" style="left:509.0px;top:209.84px;font-size:10.9px;font-weight:normal;color:#262626;transform:translateX(-50%) scaleX(0.99);transform-origin:50% 0;">101,12 €</div>
<div class="t" style="left:581.0px;top:209.84px;font-size:10.9px;font-weight:normal;color:#262626;transform:translateX(-50%) scaleX(0.99);transform-origin:50% 0;">632,00 €</div>
<div class="t" style="left:653.0px;top:209.84px;font-size:10.9px;font-weight:normal;color:#262626;transform:translateX(-50%) scaleX(0.99);transform-origin:50% 0;">0,00 €</div>
<div class="t" style="left:731.0px;top:209.84px;font-size:10.9px;font-weight:bold;color:#262626;transform:translateX(-50%) scaleX(0.97);transform-origin:50% 0;">3.722,48 €</div>
<div class="t" style="left:61.9px;top:224.20px;font-size:11.6px;font-weight:normal;color:#262626;transform:translateX(-50%) scaleX(0.87);transform-origin:50% 0;">4</div>
<div class="t" style="left:80.3px;top:225.18px;font-size:11.4px;font-weight:normal;color:#262626;transform:scaleX(1.078);transform-origin:0 0;">Sari Nieminen</div>
<div class="t" style="left:221.0px;top:224.84px;font-size:10.9px;font-weight:normal;color:#262626;transform:translateX(-50%) scaleX(0.99);transform-origin:50% 0;">16,00 €</div>
<div class="t" style="left:293.0px;top:224.84px;font-size:10.9px;font-weight:normal;color:#262626;transform:translateX(-50%) scaleX(0.99);transform-origin:50% 0;">2.304,00 €</div>
<div class="t" style="left:365.0px;top:224.84px;font-size:10.9px;font-weight:normal;color:#262626;transform:translateX(-50%) scaleX(0.99);transform-origin:50% 0;">0,00 €</div>
<div class="t" style="left:437.0px;top:224.84px;font-size:10.9px;font-weight:normal;color:#262626;transform:translateX(-50%) scaleX(0.99);transform-origin:50% 0;">0,00 €</div>
<div class="t" style="left:509.0px;top:224.84px;font-size:10.9px;font-weight:normal;color:#262626;transform:translateX(-50%) scaleX(0.99);transform-origin:50% 0;">102,40 €</div>
<div class="t" style="left:581.0px;top:224.84px;font-size:10.9px;font-weight:normal;color:#262626;transform:translateX(-50%) scaleX(0.99);transform-origin:50% 0;">0,00 €</div>
<div class="t" style="left:653.0px;top:224.84px;font-size:10.9px;font-weight:normal;color:#262626;transform:translateX(-50%) scaleX(0.99);transform-origin:50% 0;">0,00 €</div>
<div class="t" style="left:731.0px;top:224.84px;font-size:10.9px;font-weight:bold;color:#262626;transform:translateX(-50%) scaleX(0.97);transform-origin:50% 0;">2.406,40 €</div>
<div class="t" style="left:61.9px;top:239.20px;font-size:11.6px;font-weight:normal;color:#262626;transform:translateX(-50%) scaleX(0.87);transform-origin:50% 0;">5</div>
<div class="t" style="left:80.3px;top:240.18px;font-size:11.4px;font-weight:normal;color:#262626;transform:scaleX(1.083);transform-origin:0 0;">Pekka Hämäläinen</div>
<div class="t" style="left:221.0px;top:239.84px;font-size:10.9px;font-weight:normal;color:#262626;transform:translateX(-50%) scaleX(0.99);transform-origin:50% 0;">19,50 €</div>
<div class="t" style="left:293.0px;top:239.84px;font-size:10.9px;font-weight:normal;color:#262626;transform:translateX(-50%) scaleX(0.99);transform-origin:50% 0;">2.808,00 €</div>
<div class="t" style="left:365.0px;top:239.84px;font-size:10.9px;font-weight:normal;color:#262626;transform:translateX(-50%) scaleX(0.99);transform-origin:50% 0;">0,00 €</div>
<div class="t" style="left:437.0px;top:239.84px;font-size:10.9px;font-weight:normal;color:#262626;transform:translateX(-50%) scaleX(0.99);transform-origin:50% 0;">842,40 €</div>
<div class="t" style="left:509.0px;top:239.84px;font-size:10.9px;font-weight:normal;color:#262626;transform:translateX(-50%) scaleX(0.99);transform-origin:50% 0;">124,80 €</div>
<div class="t" style="left:581.0px;top:239.84px;font-size:10.9px;font-weight:normal;color:#262626;transform:translateX(-50%) scaleX(0.99);transform-origin:50% 0;">780,00 €</div>
<div class="t" style="left:653.0px;top:239.84px;font-size:10.9px;font-weight:normal;color:#262626;transform:translateX(-50%) scaleX(0.99);transform-origin:50% 0;">0,00 €</div>
<div class="t" style="left:731.0px;top:239.84px;font-size:10.9px;font-weight:bold;color:#262626;transform:translateX(-50%) scaleX(0.97);transform-origin:50% 0;">4.555,20 €</div>
<div class="t" style="left:61.9px;top:254.20px;font-size:11.6px;font-weight:normal;color:#262626;transform:translateX(-50%) scaleX(0.87);transform-origin:50% 0;">6</div>
<div class="t" style="left:80.3px;top:255.18px;font-size:11.4px;font-weight:normal;color:#262626;transform:scaleX(1.074);transform-origin:0 0;">Tiina Laine</div>
<div class="t" style="left:221.0px;top:254.84px;font-size:10.9px;font-weight:normal;color:#262626;transform:translateX(-50%) scaleX(0.99);transform-origin:50% 0;">16,50 €</div>
<div class="t" style="left:293.0px;top:254.84px;font-size:10.9px;font-weight:normal;color:#262626;transform:translateX(-50%) scaleX(0.99);transform-origin:50% 0;">1.848,00 €</div>
<div class="t" style="left:365.0px;top:254.84px;font-size:10.9px;font-weight:normal;color:#262626;transform:translateX(-50%) scaleX(0.99);transform-origin:50% 0;">0,00 €</div>
<div class="t" style="left:437.0px;top:254.84px;font-size:10.9px;font-weight:normal;color:#262626;transform:translateX(-50%) scaleX(0.99);transform-origin:50% 0;">0,00 €</div>
<div class="t" style="left:509.0px;top:254.84px;font-size:10.9px;font-weight:normal;color:#262626;transform:translateX(-50%) scaleX(0.99);transform-origin:50% 0;">105,60 €</div>
<div class="t" style="left:581.0px;top:254.84px;font-size:10.9px;font-weight:normal;color:#262626;transform:translateX(-50%) scaleX(0.99);transform-origin:50% 0;">0,00 €</div>
<div class="t" style="left:653.0px;top:254.84px;font-size:10.9px;font-weight:normal;color:#262626;transform:translateX(-50%) scaleX(0.99);transform-origin:50% 0;">0,00 €</div>
<div class="t" style="left:731.0px;top:254.84px;font-size:10.9px;font-weight:bold;color:#262626;transform:translateX(-50%) scaleX(0.97);transform-origin:50% 0;">1.953,60 €</div>
<div class="t" style="left:61.9px;top:269.20px;font-size:11.6px;font-weight:normal;color:#262626;transform:translateX(-50%) scaleX(0.87);transform-origin:50% 0;">7</div>
<div class="t" style="left:80.3px;top:270.18px;font-size:11.4px;font-weight:normal;color:#262626;transform:scaleX(1.118);transform-origin:0 0;">Antti Heikkinen</div>
<div class="t" style="left:221.0px;top:269.84px;font-size:10.9px;font-weight:normal;color:#262626;transform:translateX(-50%) scaleX(0.99);transform-origin:50% 0;">17,80 €</div>
<div class="t" style="left:293.0px;top:269.84px;font-size:10.9px;font-weight:normal;color:#262626;transform:translateX(-50%) scaleX(0.99);transform-origin:50% 0;">2.990,40 €</div>
<div class="t" style="left:365.0px;top:269.84px;font-size:10.9px;font-weight:normal;color:#262626;transform:translateX(-50%) scaleX(0.99);transform-origin:50% 0;">106,80 €</div>
<div class="t" style="left:437.0px;top:269.84px;font-size:10.9px;font-weight:normal;color:#262626;transform:translateX(-50%) scaleX(0.99);transform-origin:50% 0;">0,00 €</div>
<div class="t" style="left:509.0px;top:269.84px;font-size:10.9px;font-weight:normal;color:#262626;transform:translateX(-50%) scaleX(0.99);transform-origin:50% 0;">113,92 €</div>
<div class="t" style="left:581.0px;top:269.84px;font-size:10.9px;font-weight:normal;color:#262626;transform:translateX(-50%) scaleX(0.99);transform-origin:50% 0;">712,00 €</div>
<div class="t" style="left:653.0px;top:269.84px;font-size:10.9px;font-weight:normal;color:#262626;transform:translateX(-50%) scaleX(0.99);transform-origin:50% 0;">0,00 €</div>
<div class="t" style="left:731.0px;top:269.84px;font-size:10.9px;font-weight:bold;color:#262626;transform:translateX(-50%) scaleX(0.97);transform-origin:50% 0;">3.923,12 €</div>
<div class="t" style="left:61.9px;top:284.20px;font-size:11.6px;font-weight:normal;color:#262626;transform:translateX(-50%) scaleX(0.87);transform-origin:50% 0;">8</div>
<div class="t" style="left:80.3px;top:285.18px;font-size:11.4px;font-weight:normal;color:#262626;transform:scaleX(1.07);transform-origin:0 0;">Hanna Koskinen</div>
<div class="t" style="left:221.0px;top:284.84px;font-size:10.9px;font-weight:normal;color:#262626;transform:translateX(-50%) scaleX(0.99);transform-origin:50% 0;">21,00 €</div>
<div class="t" style="left:293.0px;top:284.84px;font-size:10.9px;font-weight:normal;color:#262626;transform:translateX(-50%) scaleX(0.99);transform-origin:50% 0;">3.192,00 €</div>
<div class="t" style="left:365.0px;top:284.84px;font-size:10.9px;font-weight:normal;color:#262626;transform:translateX(-50%) scaleX(0.99);transform-origin:50% 0;">0,00 €</div>
<div class="t" style="left:437.0px;top:284.84px;font-size:10.9px;font-weight:normal;color:#262626;transform:translateX(-50%) scaleX(0.99);transform-origin:50% 0;">302,40 €</div>
<div class="t" style="left:509.0px;top:284.84px;font-size:10.9px;font-weight:normal;color:#262626;transform:translateX(-50%) scaleX(0.99);transform-origin:50% 0;">134,40 €</div>
<div class="t" style="left:581.0px;top:284.84px;font-size:10.9px;font-weight:normal;color:#262626;transform:translateX(-50%) scaleX(0.99);transform-origin:50% 0;">0,00 €</div>
<div class="t" style="left:653.0px;top:284.84px;font-size:10.9px;font-weight:normal;color:#262626;transform:translateX(-50%) scaleX(0.99);transform-origin:50% 0;">0,00 €</div>
<div class="t" style="left:731.0px;top:284.84px;font-size:10.9px;font-weight:bold;color:#262626;transform:translateX(-50%) scaleX(0.97);transform-origin:50% 0;">3.628,80 €</div>
<div class="t" style="left:293.0px;top:299.84px;font-size:10.9px;font-weight:normal;color:#262626;transform:translateX(-50%) scaleX(0.99);transform-origin:50% 0;">0,00 €</div>
<div class="t" style="left:365.0px;top:299.84px;font-size:10.9px;font-weight:normal;color:#262626;transform:translateX(-50%) scaleX(0.99);transform-origin:50% 0;">0,00 €</div>
<div class="t" style="left:437.0px;top:299.84px;font-size:10.9px;font-weight:normal;color:#262626;transform:translateX(-50%) scaleX(0.99);transform-origin:50% 0;">0,00 €</div>
<div class="t" style="left:509.0px;top:299.84px;font-size:10.9px;font-weight:normal;color:#262626;transform:translateX(-50%) scaleX(0.99);transform-origin:50% 0;">0,00 €</div>
<div class="t" style="left:581.0px;top:299.84px;font-size:10.9px;font-weight:normal;color:#262626;transform:translateX(-50%) scaleX(0.99);transform-origin:50% 0;">0,00 €</div>
<div class="t" style="left:653.0px;top:299.84px;font-size:10.9px;font-weight:normal;color:#262626;transform:translateX(-50%) scaleX(0.99);transform-origin:50% 0;">0,00 €</div>
<div class="t" style="left:731.0px;top:299.84px;font-size:10.9px;font-weight:bold;color:#262626;transform:translateX(-50%) scaleX(0.97);transform-origin:50% 0;">0,00 €</div>
<div class="t" style="left:293.0px;top:314.84px;font-size:10.9px;font-weight:normal;color:#262626;transform:translateX(-50%) scaleX(0.99);transform-origin:50% 0;">0,00 €</div>
<div class="t" style="left:365.0px;top:314.84px;font-size:10.9px;font-weight:normal;color:#262626;transform:translateX(-50%) scaleX(0.99);transform-origin:50% 0;">0,00 €</div>
<div class="t" style="left:437.0px;top:314.84px;font-size:10.9px;font-weight:normal;color:#262626;transform:translateX(-50%) scaleX(0.99);transform-origin:50% 0;">0,00 €</div>
<div class="t" style="left:509.0px;top:314.84px;font-size:10.9px;font-weight:normal;color:#262626;transform:translateX(-50%) scaleX(0.99);transform-origin:50% 0;">0,00 €</div>
<div class="t" style="left:581.0px;top:314.84px;font-size:10.9px;font-weight:normal;color:#262626;transform:translateX(-50%) scaleX(0.99);transform-origin:50% 0;">0,00 €</div>
<div class="t" style="left:653.0px;top:314.84px;font-size:10.9px;font-weight:normal;color:#262626;transform:translateX(-50%) scaleX(0.99);transform-origin:50% 0;">0,00 €</div>
<div class="t" style="left:731.0px;top:314.84px;font-size:10.9px;font-weight:bold;color:#262626;transform:translateX(-50%) scaleX(0.97);transform-origin:50% 0;">0,00 €</div>
<div class="t" style="left:293.0px;top:329.84px;font-size:10.9px;font-weight:normal;color:#262626;transform:translateX(-50%) scaleX(0.99);transform-origin:50% 0;">0,00 €</div>
<div class="t" style="left:365.0px;top:329.84px;font-size:10.9px;font-weight:normal;color:#262626;transform:translateX(-50%) scaleX(0.99);transform-origin:50% 0;">0,00 €</div>
<div class="t" style="left:437.0px;top:329.84px;font-size:10.9px;font-weight:normal;color:#262626;transform:translateX(-50%) scaleX(0.99);transform-origin:50% 0;">0,00 €</div>
<div class="t" style="left:509.0px;top:329.84px;font-size:10.9px;font-weight:normal;color:#262626;transform:translateX(-50%) scaleX(0.99);transform-origin:50% 0;">0,00 €</div>
<div class="t" style="left:581.0px;top:329.84px;font-size:10.9px;font-weight:normal;color:#262626;transform:translateX(-50%) scaleX(0.99);transform-origin:50% 0;">0,00 €</div>
<div class="t" style="left:653.0px;top:329.84px;font-size:10.9px;font-weight:normal;color:#262626;transform:translateX(-50%) scaleX(0.99);transform-origin:50% 0;">0,00 €</div>
<div class="t" style="left:731.0px;top:329.84px;font-size:10.9px;font-weight:bold;color:#262626;transform:translateX(-50%) scaleX(0.97);transform-origin:50% 0;">0,00 €</div>
<div class="t" style="left:293.0px;top:344.84px;font-size:10.9px;font-weight:normal;color:#262626;transform:translateX(-50%) scaleX(0.99);transform-origin:50% 0;">0,00 €</div>
<div class="t" style="left:365.0px;top:344.84px;font-size:10.9px;font-weight:normal;color:#262626;transform:translateX(-50%) scaleX(0.99);transform-origin:50% 0;">0,00 €</div>
<div class="t" style="left:437.0px;top:344.84px;font-size:10.9px;font-weight:normal;color:#262626;transform:translateX(-50%) scaleX(0.99);transform-origin:50% 0;">0,00 €</div>
<div class="t" style="left:509.0px;top:344.84px;font-size:10.9px;font-weight:normal;color:#262626;transform:translateX(-50%) scaleX(0.99);transform-origin:50% 0;">0,00 €</div>
<div class="t" style="left:581.0px;top:344.84px;font-size:10.9px;font-weight:normal;color:#262626;transform:translateX(-50%) scaleX(0.99);transform-origin:50% 0;">0,00 €</div>
<div class="t" style="left:653.0px;top:344.84px;font-size:10.9px;font-weight:normal;color:#262626;transform:translateX(-50%) scaleX(0.99);transform-origin:50% 0;">0,00 €</div>
<div class="t" style="left:731.0px;top:344.84px;font-size:10.9px;font-weight:bold;color:#262626;transform:translateX(-50%) scaleX(0.97);transform-origin:50% 0;">0,00 €</div>
<div class="t" style="left:293.0px;top:359.84px;font-size:10.9px;font-weight:normal;color:#262626;transform:translateX(-50%) scaleX(0.99);transform-origin:50% 0;">0,00 €</div>
<div class="t" style="left:365.0px;top:359.84px;font-size:10.9px;font-weight:normal;color:#262626;transform:translateX(-50%) scaleX(0.99);transform-origin:50% 0;">0,00 €</div>
<div class="t" style="left:437.0px;top:359.84px;font-size:10.9px;font-weight:normal;color:#262626;transform:translateX(-50%) scaleX(0.99);transform-origin:50% 0;">0,00 €</div>
<div class="t" style="left:509.0px;top:359.84px;font-size:10.9px;font-weight:normal;color:#262626;transform:translateX(-50%) scaleX(0.99);transform-origin:50% 0;">0,00 €</div>
<div class="t" style="left:581.0px;top:359.84px;font-size:10.9px;font-weight:normal;color:#262626;transform:translateX(-50%) scaleX(0.99);transform-origin:50% 0;">0,00 €</div>
<div class="t" style="left:653.0px;top:359.84px;font-size:10.9px;font-weight:normal;color:#262626;transform:translateX(-50%) scaleX(0.99);transform-origin:50% 0;">0,00 €</div>
<div class="t" style="left:731.0px;top:359.84px;font-size:10.9px;font-weight:bold;color:#262626;transform:translateX(-50%) scaleX(0.97);transform-origin:50% 0;">0,00 €</div>
<div class="t" style="left:293.0px;top:374.84px;font-size:10.9px;font-weight:normal;color:#262626;transform:translateX(-50%) scaleX(0.99);transform-origin:50% 0;">0,00 €</div>
<div class="t" style="left:365.0px;top:374.84px;font-size:10.9px;font-weight:normal;color:#262626;transform:translateX(-50%) scaleX(0.99);transform-origin:50% 0;">0,00 €</div>
<div class="t" style="left:437.0px;top:374.84px;font-size:10.9px;font-weight:normal;color:#262626;transform:translateX(-50%) scaleX(0.99);transform-origin:50% 0;">0,00 €</div>
<div class="t" style="left:509.0px;top:374.84px;font-size:10.9px;font-weight:normal;color:#262626;transform:translateX(-50%) scaleX(0.99);transform-origin:50% 0;">0,00 €</div>
<div class="t" style="left:581.0px;top:374.84px;font-size:10.9px;font-weight:normal;color:#262626;transform:translateX(-50%) scaleX(0.99);transform-origin:50% 0;">0,00 €</div>
<div class="t" style="left:653.0px;top:374.84px;font-size:10.9px;font-weight:normal;color:#262626;transform:translateX(-50%) scaleX(0.99);transform-origin:50% 0;">0,00 €</div>
<div class="t" style="left:731.0px;top:374.84px;font-size:10.9px;font-weight:bold;color:#262626;transform:translateX(-50%) scaleX(0.97);transform-origin:50% 0;">0,00 €</div>
<div class="t" style="left:293.0px;top:389.84px;font-size:10.9px;font-weight:normal;color:#262626;transform:translateX(-50%) scaleX(0.99);transform-origin:50% 0;">0,00 €</div>
<div class="t" style="left:365.0px;top:389.84px;font-size:10.9px;font-weight:normal;color:#262626;transform:translateX(-50%) scaleX(0.99);transform-origin:50% 0;">0,00 €</div>
<div class="t" style="left:437.0px;top:389.84px;font-size:10.9px;font-weight:normal;color:#262626;transform:translateX(-50%) scaleX(0.99);transform-origin:50% 0;">0,00 €</div>
<div class="t" style="left:509.0px;top:389.84px;font-size:10.9px;font-weight:normal;color:#262626;transform:translateX(-50%) scaleX(0.99);transform-origin:50% 0;">0,00 €</div>
<div class="t" style="left:581.0px;top:389.84px;font-size:10.9px;font-weight:normal;color:#262626;transform:translateX(-50%) scaleX(0.99);transform-origin:50% 0;">0,00 €</div>
<div class="t" style="left:653.0px;top:389.84px;font-size:10.9px;font-weight:normal;color:#262626;transform:translateX(-50%) scaleX(0.99);transform-origin:50% 0;">0,00 €</div>
<div class="t" style="left:731.0px;top:389.84px;font-size:10.9px;font-weight:bold;color:#262626;transform:translateX(-50%) scaleX(0.97);transform-origin:50% 0;">0,00 €</div>
<div class="t" style="left:293.0px;top:404.84px;font-size:10.9px;font-weight:normal;color:#262626;transform:translateX(-50%) scaleX(0.99);transform-origin:50% 0;">0,00 €</div>
<div class="t" style="left:365.0px;top:404.84px;font-size:10.9px;font-weight:normal;color:#262626;transform:translateX(-50%) scaleX(0.99);transform-origin:50% 0;">0,00 €</div>
<div class="t" style="left:437.0px;top:404.84px;font-size:10.9px;font-weight:normal;color:#262626;transform:translateX(-50%) scaleX(0.99);transform-origin:50% 0;">0,00 €</div>
<div class="t" style="left:509.0px;top:404.84px;font-size:10.9px;font-weight:normal;color:#262626;transform:translateX(-50%) scaleX(0.99);transform-origin:50% 0;">0,00 €</div>
<div class="t" style="left:581.0px;top:404.84px;font-size:10.9px;font-weight:normal;color:#262626;transform:translateX(-50%) scaleX(0.99);transform-origin:50% 0;">0,00 €</div>
<div class="t" style="left:653.0px;top:404.84px;font-size:10.9px;font-weight:normal;color:#262626;transform:translateX(-50%) scaleX(0.99);transform-origin:50% 0;">0,00 €</div>
<div class="t" style="left:731.0px;top:404.84px;font-size:10.9px;font-weight:bold;color:#262626;transform:translateX(-50%) scaleX(0.97);transform-origin:50% 0;">0,00 €</div>
<div class="t" style="left:293.0px;top:419.84px;font-size:10.9px;font-weight:normal;color:#262626;transform:translateX(-50%) scaleX(0.99);transform-origin:50% 0;">0,00 €</div>
<div class="t" style="left:365.0px;top:419.84px;font-size:10.9px;font-weight:normal;color:#262626;transform:translateX(-50%) scaleX(0.99);transform-origin:50% 0;">0,00 €</div>
<div class="t" style="left:437.0px;top:419.84px;font-size:10.9px;font-weight:normal;color:#262626;transform:translateX(-50%) scaleX(0.99);transform-origin:50% 0;">0,00 €</div>
<div class="t" style="left:509.0px;top:419.84px;font-size:10.9px;font-weight:normal;color:#262626;transform:translateX(-50%) scaleX(0.99);transform-origin:50% 0;">0,00 €</div>
<div class="t" style="left:581.0px;top:419.84px;font-size:10.9px;font-weight:normal;color:#262626;transform:translateX(-50%) scaleX(0.99);transform-origin:50% 0;">0,00 €</div>
<div class="t" style="left:653.0px;top:419.84px;font-size:10.9px;font-weight:normal;color:#262626;transform:translateX(-50%) scaleX(0.99);transform-origin:50% 0;">0,00 €</div>
<div class="t" style="left:731.0px;top:419.84px;font-size:10.9px;font-weight:bold;color:#262626;transform:translateX(-50%) scaleX(0.97);transform-origin:50% 0;">0,00 €</div>
<div class="t" style="left:293.0px;top:434.84px;font-size:10.9px;font-weight:normal;color:#262626;transform:translateX(-50%) scaleX(0.99);transform-origin:50% 0;">0,00 €</div>
<div class="t" style="left:365.0px;top:434.84px;font-size:10.9px;font-weight:normal;color:#262626;transform:translateX(-50%) scaleX(0.99);transform-origin:50% 0;">0,00 €</div>
<div class="t" style="left:437.0px;top:434.84px;font-size:10.9px;font-weight:normal;color:#262626;transform:translateX(-50%) scaleX(0.99);transform-origin:50% 0;">0,00 €</div>
<div class="t" style="left:509.0px;top:434.84px;font-size:10.9px;font-weight:normal;color:#262626;transform:translateX(-50%) scaleX(0.99);transform-origin:50% 0;">0,00 €</div>
<div class="t" style="left:581.0px;top:434.84px;font-size:10.9px;font-weight:normal;color:#262626;transform:translateX(-50%) scaleX(0.99);transform-origin:50% 0;">0,00 €</div>
<div class="t" style="left:653.0px;top:434.84px;font-size:10.9px;font-weight:normal;color:#262626;transform:translateX(-50%) scaleX(0.99);transform-origin:50% 0;">0,00 €</div>
<div class="t" style="left:731.0px;top:434.84px;font-size:10.9px;font-weight:bold;color:#262626;transform:translateX(-50%) scaleX(0.97);transform-origin:50% 0;">0,00 €</div>
<div class="t" style="left:293.0px;top:449.84px;font-size:10.9px;font-weight:normal;color:#262626;transform:translateX(-50%) scaleX(0.99);transform-origin:50% 0;">0,00 €</div>
<div class="t" style="left:365.0px;top:449.84px;font-size:10.9px;font-weight:normal;color:#262626;transform:translateX(-50%) scaleX(0.99);transform-origin:50% 0;">0,00 €</div>
<div class="t" style="left:437.0px;top:449.84px;font-size:10.9px;font-weight:normal;color:#262626;transform:translateX(-50%) scaleX(0.99);transform-origin:50% 0;">0,00 €</div>
<div class="t" style="left:509.0px;top:449.84px;font-size:10.9px;font-weight:normal;color:#262626;transform:translateX(-50%) scaleX(0.99);transform-origin:50% 0;">0,00 €</div>
<div class="t" style="left:581.0px;top:449.84px;font-size:10.9px;font-weight:normal;color:#262626;transform:translateX(-50%) scaleX(0.99);transform-origin:50% 0;">0,00 €</div>
<div class="t" style="left:653.0px;top:449.84px;font-size:10.9px;font-weight:normal;color:#262626;transform:translateX(-50%) scaleX(0.99);transform-origin:50% 0;">0,00 €</div>
<div class="t" style="left:731.0px;top:449.84px;font-size:10.9px;font-weight:bold;color:#262626;transform:translateX(-50%) scaleX(0.97);transform-origin:50% 0;">0,00 €</div>
<div class="t" style="left:293.0px;top:464.84px;font-size:10.9px;font-weight:normal;color:#262626;transform:translateX(-50%) scaleX(0.99);transform-origin:50% 0;">0,00 €</div>
<div class="t" style="left:365.0px;top:464.84px;font-size:10.9px;font-weight:normal;color:#262626;transform:translateX(-50%) scaleX(0.99);transform-origin:50% 0;">0,00 €</div>
<div class="t" style="left:437.0px;top:464.84px;font-size:10.9px;font-weight:normal;color:#262626;transform:translateX(-50%) scaleX(0.99);transform-origin:50% 0;">0,00 €</div>
<div class="t" style="left:509.0px;top:464.84px;font-size:10.9px;font-weight:normal;color:#262626;transform:translateX(-50%) scaleX(0.99);transform-origin:50% 0;">0,00 €</div>
<div class="t" style="left:581.0px;top:464.84px;font-size:10.9px;font-weight:normal;color:#262626;transform:translateX(-50%) scaleX(0.99);transform-origin:50% 0;">0,00 €</div>
<div class="t" style="left:653.0px;top:464.84px;font-size:10.9px;font-weight:normal;color:#262626;transform:translateX(-50%) scaleX(0.99);transform-origin:50% 0;">0,00 €</div>
<div class="t" style="left:731.0px;top:464.84px;font-size:10.9px;font-weight:bold;color:#262626;transform:translateX(-50%) scaleX(0.97);transform-origin:50% 0;">0,00 €</div>
<div class="t" style="left:293.0px;top:479.84px;font-size:10.9px;font-weight:normal;color:#262626;transform:translateX(-50%) scaleX(0.99);transform-origin:50% 0;">0,00 €</div>
<div class="t" style="left:365.0px;top:479.84px;font-size:10.9px;font-weight:normal;color:#262626;transform:translateX(-50%) scaleX(0.99);transform-origin:50% 0;">0,00 €</div>
<div class="t" style="left:437.0px;top:479.84px;font-size:10.9px;font-weight:normal;color:#262626;transform:translateX(-50%) scaleX(0.99);transform-origin:50% 0;">0,00 €</div>
<div class="t" style="left:509.0px;top:479.84px;font-size:10.9px;font-weight:normal;color:#262626;transform:translateX(-50%) scaleX(0.99);transform-origin:50% 0;">0,00 €</div>
<div class="t" style="left:581.0px;top:479.84px;font-size:10.9px;font-weight:normal;color:#262626;transform:translateX(-50%) scaleX(0.99);transform-origin:50% 0;">0,00 €</div>
<div class="t" style="left:653.0px;top:479.84px;font-size:10.9px;font-weight:normal;color:#262626;transform:translateX(-50%) scaleX(0.99);transform-origin:50% 0;">0,00 €</div>
<div class="t" style="left:731.0px;top:479.84px;font-size:10.9px;font-weight:bold;color:#262626;transform:translateX(-50%) scaleX(0.97);transform-origin:50% 0;">0,00 €</div>
<div class="t" style="left:293.0px;top:494.84px;font-size:10.9px;font-weight:normal;color:#262626;transform:translateX(-50%) scaleX(0.99);transform-origin:50% 0;">0,00 €</div>
<div class="t" style="left:365.0px;top:494.84px;font-size:10.9px;font-weight:normal;color:#262626;transform:translateX(-50%) scaleX(0.99);transform-origin:50% 0;">0,00 €</div>
<div class="t" style="left:437.0px;top:494.84px;font-size:10.9px;font-weight:normal;color:#262626;transform:translateX(-50%) scaleX(0.99);transform-origin:50% 0;">0,00 €</div>
<div class="t" style="left:509.0px;top:494.84px;font-size:10.9px;font-weight:normal;color:#262626;transform:translateX(-50%) scaleX(0.99);transform-origin:50% 0;">0,00 €</div>
<div class="t" style="left:581.0px;top:494.84px;font-size:10.9px;font-weight:normal;color:#262626;transform:translateX(-50%) scaleX(0.99);transform-origin:50% 0;">0,00 €</div>
<div class="t" style="left:653.0px;top:494.84px;font-size:10.9px;font-weight:normal;color:#262626;transform:translateX(-50%) scaleX(0.99);transform-origin:50% 0;">0,00 €</div>
<div class="t" style="left:731.0px;top:494.84px;font-size:10.9px;font-weight:bold;color:#262626;transform:translateX(-50%) scaleX(0.97);transform-origin:50% 0;">0,00 €</div>
<div class="t" style="left:293.0px;top:509.84px;font-size:10.9px;font-weight:normal;color:#262626;transform:translateX(-50%) scaleX(0.99);transform-origin:50% 0;">0,00 €</div>
<div class="t" style="left:365.0px;top:509.84px;font-size:10.9px;font-weight:normal;color:#262626;transform:translateX(-50%) scaleX(0.99);transform-origin:50% 0;">0,00 €</div>
<div class="t" style="left:437.0px;top:509.84px;font-size:10.9px;font-weight:normal;color:#262626;transform:translateX(-50%) scaleX(0.99);transform-origin:50% 0;">0,00 €</div>
<div class="t" style="left:509.0px;top:509.84px;font-size:10.9px;font-weight:normal;color:#262626;transform:translateX(-50%) scaleX(0.99);transform-origin:50% 0;">0,00 €</div>
<div class="t" style="left:581.0px;top:509.84px;font-size:10.9px;font-weight:normal;color:#262626;transform:translateX(-50%) scaleX(0.99);transform-origin:50% 0;">0,00 €</div>
<div class="t" style="left:653.0px;top:509.84px;font-size:10.9px;font-weight:normal;color:#262626;transform:translateX(-50%) scaleX(0.99);transform-origin:50% 0;">0,00 €</div>
<div class="t" style="left:731.0px;top:509.84px;font-size:10.9px;font-weight:bold;color:#262626;transform:translateX(-50%) scaleX(0.97);transform-origin:50% 0;">0,00 €</div>
<div class="t" style="left:293.0px;top:524.84px;font-size:10.9px;font-weight:normal;color:#262626;transform:translateX(-50%) scaleX(0.99);transform-origin:50% 0;">0,00 €</div>
<div class="t" style="left:365.0px;top:524.84px;font-size:10.9px;font-weight:normal;color:#262626;transform:translateX(-50%) scaleX(0.99);transform-origin:50% 0;">0,00 €</div>
<div class="t" style="left:437.0px;top:524.84px;font-size:10.9px;font-weight:normal;color:#262626;transform:translateX(-50%) scaleX(0.99);transform-origin:50% 0;">0,00 €</div>
<div class="t" style="left:509.0px;top:524.84px;font-size:10.9px;font-weight:normal;color:#262626;transform:translateX(-50%) scaleX(0.99);transform-origin:50% 0;">0,00 €</div>
<div class="t" style="left:581.0px;top:524.84px;font-size:10.9px;font-weight:normal;color:#262626;transform:translateX(-50%) scaleX(0.99);transform-origin:50% 0;">0,00 €</div>
<div class="t" style="left:653.0px;top:524.84px;font-size:10.9px;font-weight:normal;color:#262626;transform:translateX(-50%) scaleX(0.99);transform-origin:50% 0;">0,00 €</div>
<div class="t" style="left:731.0px;top:524.84px;font-size:10.9px;font-weight:bold;color:#262626;transform:translateX(-50%) scaleX(0.97);transform-origin:50% 0;">0,00 €</div>
<div class="t" style="left:293.0px;top:539.84px;font-size:10.9px;font-weight:normal;color:#262626;transform:translateX(-50%) scaleX(0.99);transform-origin:50% 0;">0,00 €</div>
<div class="t" style="left:365.0px;top:539.84px;font-size:10.9px;font-weight:normal;color:#262626;transform:translateX(-50%) scaleX(0.99);transform-origin:50% 0;">0,00 €</div>
<div class="t" style="left:437.0px;top:539.84px;font-size:10.9px;font-weight:normal;color:#262626;transform:translateX(-50%) scaleX(0.99);transform-origin:50% 0;">0,00 €</div>
<div class="t" style="left:509.0px;top:539.84px;font-size:10.9px;font-weight:normal;color:#262626;transform:translateX(-50%) scaleX(0.99);transform-origin:50% 0;">0,00 €</div>
<div class="t" style="left:581.0px;top:539.84px;font-size:10.9px;font-weight:normal;color:#262626;transform:translateX(-50%) scaleX(0.99);transform-origin:50% 0;">0,00 €</div>
<div class="t" style="left:653.0px;top:539.84px;font-size:10.9px;font-weight:normal;color:#262626;transform:translateX(-50%) scaleX(0.99);transform-origin:50% 0;">0,00 €</div>
<div class="t" style="left:731.0px;top:539.84px;font-size:10.9px;font-weight:bold;color:#262626;transform:translateX(-50%) scaleX(0.97);transform-origin:50% 0;">0,00 €</div>
<div class="t" style="left:80px;top:554.20px;font-size:11.6px;font-weight:bold;color:#262b20;transform:scaleX(0.85);transform-origin:0 0;">YHTEENSÄ</div>
<div class="t" style="left:293.0px;top:554.84px;font-size:10.9px;font-weight:bold;color:#262b20;transform:translateX(-50%) scaleX(0.972);transform-origin:50% 0;">22.963,20 €</div>
<div class="t" style="left:365.0px;top:554.84px;font-size:10.9px;font-weight:bold;color:#262b20;transform:translateX(-50%) scaleX(0.972);transform-origin:50% 0;">399,36 €</div>
<div class="t" style="left:437.0px;top:554.84px;font-size:10.9px;font-weight:bold;color:#262b20;transform:translateX(-50%) scaleX(0.972);transform-origin:50% 0;">1.144,80 €</div>
<div class="t" style="left:509.0px;top:554.84px;font-size:10.9px;font-weight:bold;color:#262b20;transform:translateX(-50%) scaleX(0.972);transform-origin:50% 0;">938,24 €</div>
<div class="t" style="left:581.0px;top:554.84px;font-size:10.9px;font-weight:bold;color:#262b20;transform:translateX(-50%) scaleX(0.972);transform-origin:50% 0;">3.724,00 €</div>
<div class="t" style="left:653.0px;top:554.84px;font-size:10.9px;font-weight:bold;color:#262b20;transform:translateX(-50%) scaleX(0.972);transform-origin:50% 0;">0,00 €</div>
<div class="t" style="left:731.0px;top:554.84px;font-size:10.9px;font-weight:bold;color:#262b20;transform:translateX(-50%) scaleX(0.972);transform-origin:50% 0;">29.169,60 €</div>
<div class="t" style="left:50.5px;top:588.87px;font-size:13.4px;font-weight:bold;color:#262b20;transform:scaleX(0.928);transform-origin:0 0;">KUSTANNUS OSASTOITTAIN</div>
<div class="t" style="left:131.5px;top:610.30px;font-size:11.6px;font-weight:bold;color:#ffffff;transform:translateX(-50%) scaleX(0.864);transform-origin:50% 0;">Osasto</div>
<div class="t" style="left:221.0px;top:610.30px;font-size:11.6px;font-weight:bold;color:#ffffff;transform:translateX(-50%) scaleX(0.915);transform-origin:50% 0;">Henkilöitä</div>
<div class="t" style="left:293.0px;top:610.30px;font-size:11.6px;font-weight:bold;color:#ffffff;transform:translateX(-50%) scaleX(0.879);transform-origin:50% 0;">Tunnit</div>
<div class="t" style="left:365.0px;top:610.30px;font-size:11.6px;font-weight:bold;color:#ffffff;transform:translateX(-50%) scaleX(0.856);transform-origin:50% 0;">Kustannus</div>
<div class="t" style="left:61.9px;top:625.20px;font-size:11.6px;font-weight:normal;color:#262626;transform:translateX(-50%) scaleX(0.87);transform-origin:50% 0;">1</div>
<div class="t" style="left:80.3px;top:626.18px;font-size:11.4px;font-weight:normal;color:#262626;transform:scaleX(1.085);transform-origin:0 0;">Tuotanto</div>
<div class="t" style="left:221.0px;top:625.20px;font-size:11.6px;font-weight:normal;color:#262626;transform:translateX(-50%) scaleX(0.87);transform-origin:50% 0;">2</div>
<div class="t" style="left:293.0px;top:625.84px;font-size:10.9px;font-weight:normal;color:#262626;transform:translateX(-50%) scaleX(0.99);transform-origin:50% 0;">320</div>
<div class="t" style="left:365.0px;top:625.84px;font-size:10.9px;font-weight:normal;color:#262626;transform:translateX(-50%) scaleX(0.99);transform-origin:50% 0;">9.559,20 €</div>
<div class="t" style="left:61.9px;top:640.20px;font-size:11.6px;font-weight:normal;color:#262626;transform:translateX(-50%) scaleX(0.87);transform-origin:50% 0;">2</div>
<div class="t" style="left:80.3px;top:641.18px;font-size:11.4px;font-weight:normal;color:#262626;transform:scaleX(1.085);transform-origin:0 0;">Myynti</div>
<div class="t" style="left:221.0px;top:640.20px;font-size:11.6px;font-weight:normal;color:#262626;transform:translateX(-50%) scaleX(0.87);transform-origin:50% 0;">2</div>
<div class="t" style="left:293.0px;top:640.84px;font-size:10.9px;font-weight:normal;color:#262626;transform:translateX(-50%) scaleX(0.99);transform-origin:50% 0;">320</div>
<div class="t" style="left:365.0px;top:640.84px;font-size:10.9px;font-weight:normal;color:#262626;transform:translateX(-50%) scaleX(0.99);transform-origin:50% 0;">6.382,40 €</div>
<div class="t" style="left:61.9px;top:655.20px;font-size:11.6px;font-weight:normal;color:#262626;transform:translateX(-50%) scaleX(0.87);transform-origin:50% 0;">3</div>
<div class="t" style="left:80.3px;top:656.18px;font-size:11.4px;font-weight:normal;color:#262626;transform:scaleX(1.07);transform-origin:0 0;">Varasto</div>
<div class="t" style="left:221.0px;top:655.20px;font-size:11.6px;font-weight:normal;color:#262626;transform:translateX(-50%) scaleX(0.87);transform-origin:50% 0;">1</div>
<div class="t" style="left:293.0px;top:655.84px;font-size:10.9px;font-weight:normal;color:#262626;transform:translateX(-50%) scaleX(0.99);transform-origin:50% 0;">176</div>
<div class="t" style="left:365.0px;top:655.84px;font-size:10.9px;font-weight:normal;color:#262626;transform:translateX(-50%) scaleX(0.99);transform-origin:50% 0;">3.722,48 €</div>
<div class="t" style="left:61.9px;top:670.20px;font-size:11.6px;font-weight:normal;color:#262626;transform:translateX(-50%) scaleX(0.87);transform-origin:50% 0;">4</div>
<div class="t" style="left:80.3px;top:671.18px;font-size:11.4px;font-weight:normal;color:#262626;transform:scaleX(1.197);transform-origin:0 0;">Hallinto</div>
<div class="t" style="left:221.0px;top:670.20px;font-size:11.6px;font-weight:normal;color:#262626;transform:translateX(-50%) scaleX(0.87);transform-origin:50% 0;">1</div>
<div class="t" style="left:293.0px;top:670.84px;font-size:10.9px;font-weight:normal;color:#262626;transform:translateX(-50%) scaleX(0.99);transform-origin:50% 0;">112</div>
<div class="t" style="left:365.0px;top:670.84px;font-size:10.9px;font-weight:normal;color:#262626;transform:translateX(-50%) scaleX(0.99);transform-origin:50% 0;">1.953,60 €</div>
<div class="t" style="left:61.9px;top:685.20px;font-size:11.6px;font-weight:normal;color:#262626;transform:translateX(-50%) scaleX(0.87);transform-origin:50% 0;">5</div>
<div class="t" style="left:80.3px;top:686.18px;font-size:11.4px;font-weight:normal;color:#262626;transform:scaleX(1.134);transform-origin:0 0;">Keittiö</div>
<div class="t" style="left:221.0px;top:685.20px;font-size:11.6px;font-weight:normal;color:#262626;transform:translateX(-50%) scaleX(0.87);transform-origin:50% 0;">1</div>
<div class="t" style="left:293.0px;top:685.84px;font-size:10.9px;font-weight:normal;color:#262626;transform:translateX(-50%) scaleX(0.99);transform-origin:50% 0;">168</div>
<div class="t" style="left:365.0px;top:685.84px;font-size:10.9px;font-weight:normal;color:#262626;transform:translateX(-50%) scaleX(0.99);transform-origin:50% 0;">3.923,12 €</div>
<div style="left:7px;top:0px;width:1446px;height:8px;background:linear-gradient(#e9e9e9,#f0f0f0);"></div>
<div style="left:7px;top:7px;width:1446px;height:1px;background:#f2f2f2;"></div>
<div style="left:7px;top:8px;width:1446px;height:1px;background:#ababab;"></div>
<div style="left:30px;top:0px;width:17px;height:8px;background:#e1e1e1;"></div>
<div style="left:47px;top:0px;width:1px;height:8px;background:#dcdcdc;"></div>
<div style="left:78px;top:0px;width:1px;height:8px;background:#dcdcdc;"></div>
<div style="left:185px;top:0px;width:1px;height:8px;background:#dcdcdc;"></div>
<div style="left:257px;top:0px;width:1px;height:8px;background:#dcdcdc;"></div>
<div style="left:329px;top:0px;width:1px;height:8px;background:#dcdcdc;"></div>
<div style="left:401px;top:0px;width:1px;height:8px;background:#dcdcdc;"></div>
<div style="left:473px;top:0px;width:1px;height:8px;background:#dcdcdc;"></div>
<div style="left:545px;top:0px;width:1px;height:8px;background:#dcdcdc;"></div>
<div style="left:617px;top:0px;width:1px;height:8px;background:#dcdcdc;"></div>
<div style="left:689px;top:0px;width:1px;height:8px;background:#dcdcdc;"></div>
<div style="left:773px;top:0px;width:1px;height:8px;background:#dcdcdc;"></div>
<div style="left:827px;top:0px;width:1px;height:8px;background:#dcdcdc;"></div>
<div style="left:881px;top:0px;width:1px;height:8px;background:#dcdcdc;"></div>
<div style="left:935px;top:0px;width:1px;height:8px;background:#dcdcdc;"></div>
<div style="left:989px;top:0px;width:1px;height:8px;background:#dcdcdc;"></div>
<div style="left:1043px;top:0px;width:1px;height:8px;background:#dcdcdc;"></div>
<div style="left:1097px;top:0px;width:1px;height:8px;background:#dcdcdc;"></div>
<div style="left:1151px;top:0px;width:1px;height:8px;background:#dcdcdc;"></div>
<div style="left:1205px;top:0px;width:1px;height:8px;background:#dcdcdc;"></div>
<div style="left:1259px;top:0px;width:1px;height:8px;background:#dcdcdc;"></div>
<div style="left:1313px;top:0px;width:1px;height:8px;background:#dcdcdc;"></div>
<div style="left:1367px;top:0px;width:1px;height:8px;background:#dcdcdc;"></div>
<div style="left:1421px;top:0px;width:1px;height:8px;background:#dcdcdc;"></div>
<div style="left:1475px;top:0px;width:1px;height:8px;background:#dcdcdc;"></div>
<div class="t" style="left:38.0px;top:-6.61px;font-size:11.5px;font-weight:normal;color:#217346;transform:translateX(-50%) scaleX(1.0);transform-origin:50% 0;will-change:transform;">A</div>
<div class="t" style="left:62.5px;top:-6.61px;font-size:11.5px;font-weight:normal;color:#4a4a4a;transform:translateX(-50%) scaleX(1.0);transform-origin:50% 0;will-change:transform;">B</div>
<div class="t" style="left:131.5px;top:-6.61px;font-size:11.5px;font-weight:normal;color:#4a4a4a;transform:translateX(-50%) scaleX(1.0);transform-origin:50% 0;will-change:transform;">C</div>
<div class="t" style="left:221.0px;top:-6.61px;font-size:11.5px;font-weight:normal;color:#4a4a4a;transform:translateX(-50%) scaleX(1.0);transform-origin:50% 0;will-change:transform;">D</div>
<div class="t" style="left:293.0px;top:-6.61px;font-size:11.5px;font-weight:normal;color:#4a4a4a;transform:translateX(-50%) scaleX(1.0);transform-origin:50% 0;will-change:transform;">E</div>
<div class="t" style="left:365.0px;top:-6.61px;font-size:11.5px;font-weight:normal;color:#4a4a4a;transform:translateX(-50%) scaleX(1.0);transform-origin:50% 0;will-change:transform;">F</div>
<div class="t" style="left:437.0px;top:-6.61px;font-size:11.5px;font-weight:normal;color:#4a4a4a;transform:translateX(-50%) scaleX(1.0);transform-origin:50% 0;will-change:transform;">G</div>
<div class="t" style="left:509.0px;top:-6.61px;font-size:11.5px;font-weight:normal;color:#4a4a4a;transform:translateX(-50%) scaleX(1.0);transform-origin:50% 0;will-change:transform;">H</div>
<div class="t" style="left:581.0px;top:-6.61px;font-size:11.5px;font-weight:normal;color:#4a4a4a;transform:translateX(-50%) scaleX(1.0);transform-origin:50% 0;will-change:transform;">I</div>
<div class="t" style="left:653.0px;top:-6.61px;font-size:11.5px;font-weight:normal;color:#4a4a4a;transform:translateX(-50%) scaleX(1.0);transform-origin:50% 0;will-change:transform;">J</div>
<div class="t" style="left:731.0px;top:-6.61px;font-size:11.5px;font-weight:normal;color:#4a4a4a;transform:translateX(-50%) scaleX(1.0);transform-origin:50% 0;will-change:transform;">K</div>
<div class="t" style="left:800.0px;top:-6.61px;font-size:11.5px;font-weight:normal;color:#4a4a4a;transform:translateX(-50%) scaleX(1.0);transform-origin:50% 0;will-change:transform;">L</div>
<div class="t" style="left:854.0px;top:-6.61px;font-size:11.5px;font-weight:normal;color:#4a4a4a;transform:translateX(-50%) scaleX(1.0);transform-origin:50% 0;will-change:transform;">M</div>
<div class="t" style="left:908.0px;top:-6.61px;font-size:11.5px;font-weight:normal;color:#4a4a4a;transform:translateX(-50%) scaleX(1.0);transform-origin:50% 0;will-change:transform;">N</div>
<div class="t" style="left:962.0px;top:-6.61px;font-size:11.5px;font-weight:normal;color:#4a4a4a;transform:translateX(-50%) scaleX(1.0);transform-origin:50% 0;will-change:transform;">O</div>
<div class="t" style="left:1016.0px;top:-6.61px;font-size:11.5px;font-weight:normal;color:#4a4a4a;transform:translateX(-50%) scaleX(1.0);transform-origin:50% 0;will-change:transform;">P</div>
<div class="t" style="left:1070.0px;top:-6.61px;font-size:11.5px;font-weight:normal;color:#4a4a4a;transform:translateX(-50%) scaleX(1.0);transform-origin:50% 0;will-change:transform;">Q</div>
<div class="t" style="left:1124.0px;top:-6.61px;font-size:11.5px;font-weight:normal;color:#4a4a4a;transform:translateX(-50%) scaleX(1.0);transform-origin:50% 0;will-change:transform;">R</div>
<div class="t" style="left:1178.0px;top:-6.61px;font-size:11.5px;font-weight:normal;color:#4a4a4a;transform:translateX(-50%) scaleX(1.0);transform-origin:50% 0;will-change:transform;">S</div>
<div class="t" style="left:1232.0px;top:-6.61px;font-size:11.5px;font-weight:normal;color:#4a4a4a;transform:translateX(-50%) scaleX(1.0);transform-origin:50% 0;will-change:transform;">T</div>
<div class="t" style="left:1286.0px;top:-6.61px;font-size:11.5px;font-weight:normal;color:#4a4a4a;transform:translateX(-50%) scaleX(1.0);transform-origin:50% 0;will-change:transform;">U</div>
<div class="t" style="left:1340.0px;top:-6.61px;font-size:11.5px;font-weight:normal;color:#4a4a4a;transform:translateX(-50%) scaleX(1.0);transform-origin:50% 0;will-change:transform;">V</div>
<div class="t" style="left:1394.0px;top:-6.61px;font-size:11.5px;font-weight:normal;color:#4a4a4a;transform:translateX(-50%) scaleX(1.0);transform-origin:50% 0;will-change:transform;">W</div>
<div class="t" style="left:1448.0px;top:-6.61px;font-size:11.5px;font-weight:normal;color:#4a4a4a;transform:translateX(-50%) scaleX(1.0);transform-origin:50% 0;will-change:transform;">X</div>
<div style="left:7px;top:9px;width:22px;height:686px;background:#efefef;"></div>
<div style="left:29px;top:0px;width:1px;height:695px;background:#ababab;"></div>
<div style="left:7px;top:9px;width:22px;height:14px;background:#e1e1e1;"></div>
<div style="left:7px;top:23px;width:22px;height:1px;background:#c4c4c4;"></div>
<div class="t" style="left:18.5px;top:8.58px;font-size:12.4px;font-weight:normal;color:#217346;transform:translateX(-50%) scaleX(0.82);transform-origin:50% 0;will-change:transform;">1</div>
<div style="left:7px;top:38px;width:22px;height:1px;background:#dcdcdc;"></div>
<div class="t" style="left:18.5px;top:23.58px;font-size:12.4px;font-weight:normal;color:#444444;transform:translateX(-50%) scaleX(0.82);transform-origin:50% 0;will-change:transform;">2</div>
<div style="left:7px;top:75px;width:22px;height:1px;background:#dcdcdc;"></div>
<div class="t" style="left:18.5px;top:60.58px;font-size:12.4px;font-weight:normal;color:#444444;transform:translateX(-50%) scaleX(0.82);transform-origin:50% 0;will-change:transform;">3</div>
<div style="left:7px;top:90px;width:22px;height:1px;background:#dcdcdc;"></div>
<div class="t" style="left:18.5px;top:75.58px;font-size:12.4px;font-weight:normal;color:#444444;transform:translateX(-50%) scaleX(0.82);transform-origin:50% 0;will-change:transform;">4</div>
<div style="left:7px;top:122px;width:22px;height:1px;background:#dcdcdc;"></div>
<div class="t" style="left:18.5px;top:107.58px;font-size:12.4px;font-weight:normal;color:#444444;transform:translateX(-50%) scaleX(0.82);transform-origin:50% 0;will-change:transform;">5</div>
<div style="left:7px;top:137px;width:22px;height:1px;background:#dcdcdc;"></div>
<div class="t" style="left:18.5px;top:122.58px;font-size:12.4px;font-weight:normal;color:#444444;transform:translateX(-50%) scaleX(0.82);transform-origin:50% 0;will-change:transform;">6</div>
<div style="left:7px;top:163px;width:22px;height:1px;background:#dcdcdc;"></div>
<div class="t" style="left:18.5px;top:148.58px;font-size:12.4px;font-weight:normal;color:#444444;transform:translateX(-50%) scaleX(0.82);transform-origin:50% 0;will-change:transform;">7</div>
<div style="left:7px;top:178px;width:22px;height:1px;background:#dcdcdc;"></div>
<div class="t" style="left:18.5px;top:163.58px;font-size:12.4px;font-weight:normal;color:#444444;transform:translateX(-50%) scaleX(0.82);transform-origin:50% 0;will-change:transform;">8</div>
<div style="left:7px;top:193px;width:22px;height:1px;background:#dcdcdc;"></div>
<div class="t" style="left:18.5px;top:178.58px;font-size:12.4px;font-weight:normal;color:#444444;transform:translateX(-50%) scaleX(0.82);transform-origin:50% 0;will-change:transform;">9</div>
<div style="left:7px;top:208px;width:22px;height:1px;background:#dcdcdc;"></div>
<div class="t" style="left:18.5px;top:193.58px;font-size:12.4px;font-weight:normal;color:#444444;transform:translateX(-50%) scaleX(0.82);transform-origin:50% 0;will-change:transform;">10</div>
<div style="left:7px;top:223px;width:22px;height:1px;background:#dcdcdc;"></div>
<div class="t" style="left:18.5px;top:208.58px;font-size:12.4px;font-weight:normal;color:#444444;transform:translateX(-50%) scaleX(0.82);transform-origin:50% 0;will-change:transform;">11</div>
<div style="left:7px;top:238px;width:22px;height:1px;background:#dcdcdc;"></div>
<div class="t" style="left:18.5px;top:223.58px;font-size:12.4px;font-weight:normal;color:#444444;transform:translateX(-50%) scaleX(0.82);transform-origin:50% 0;will-change:transform;">12</div>
<div style="left:7px;top:253px;width:22px;height:1px;background:#dcdcdc;"></div>
<div class="t" style="left:18.5px;top:238.58px;font-size:12.4px;font-weight:normal;color:#444444;transform:translateX(-50%) scaleX(0.82);transform-origin:50% 0;will-change:transform;">13</div>
<div style="left:7px;top:268px;width:22px;height:1px;background:#dcdcdc;"></div>
<div class="t" style="left:18.5px;top:253.58px;font-size:12.4px;font-weight:normal;color:#444444;transform:translateX(-50%) scaleX(0.82);transform-origin:50% 0;will-change:transform;">14</div>
<div style="left:7px;top:283px;width:22px;height:1px;background:#dcdcdc;"></div>
<div class="t" style="left:18.5px;top:268.58px;font-size:12.4px;font-weight:normal;color:#444444;transform:translateX(-50%) scaleX(0.82);transform-origin:50% 0;will-change:transform;">15</div>
<div style="left:7px;top:298px;width:22px;height:1px;background:#dcdcdc;"></div>
<div class="t" style="left:18.5px;top:283.58px;font-size:12.4px;font-weight:normal;color:#444444;transform:translateX(-50%) scaleX(0.82);transform-origin:50% 0;will-change:transform;">16</div>
<div style="left:7px;top:313px;width:22px;height:1px;background:#dcdcdc;"></div>
<div class="t" style="left:18.5px;top:298.58px;font-size:12.4px;font-weight:normal;color:#444444;transform:translateX(-50%) scaleX(0.82);transform-origin:50% 0;will-change:transform;">17</div>
<div style="left:7px;top:328px;width:22px;height:1px;background:#dcdcdc;"></div>
<div class="t" style="left:18.5px;top:313.58px;font-size:12.4px;font-weight:normal;color:#444444;transform:translateX(-50%) scaleX(0.82);transform-origin:50% 0;will-change:transform;">18</div>
<div style="left:7px;top:343px;width:22px;height:1px;background:#dcdcdc;"></div>
<div class="t" style="left:18.5px;top:328.58px;font-size:12.4px;font-weight:normal;color:#444444;transform:translateX(-50%) scaleX(0.82);transform-origin:50% 0;will-change:transform;">19</div>
<div style="left:7px;top:358px;width:22px;height:1px;background:#dcdcdc;"></div>
<div class="t" style="left:18.5px;top:343.58px;font-size:12.4px;font-weight:normal;color:#444444;transform:translateX(-50%) scaleX(0.82);transform-origin:50% 0;will-change:transform;">20</div>
<div style="left:7px;top:373px;width:22px;height:1px;background:#dcdcdc;"></div>
<div class="t" style="left:18.5px;top:358.58px;font-size:12.4px;font-weight:normal;color:#444444;transform:translateX(-50%) scaleX(0.82);transform-origin:50% 0;will-change:transform;">21</div>
<div style="left:7px;top:388px;width:22px;height:1px;background:#dcdcdc;"></div>
<div class="t" style="left:18.5px;top:373.58px;font-size:12.4px;font-weight:normal;color:#444444;transform:translateX(-50%) scaleX(0.82);transform-origin:50% 0;will-change:transform;">22</div>
<div style="left:7px;top:403px;width:22px;height:1px;background:#dcdcdc;"></div>
<div class="t" style="left:18.5px;top:388.58px;font-size:12.4px;font-weight:normal;color:#444444;transform:translateX(-50%) scaleX(0.82);transform-origin:50% 0;will-change:transform;">23</div>
<div style="left:7px;top:418px;width:22px;height:1px;background:#dcdcdc;"></div>
<div class="t" style="left:18.5px;top:403.58px;font-size:12.4px;font-weight:normal;color:#444444;transform:translateX(-50%) scaleX(0.82);transform-origin:50% 0;will-change:transform;">24</div>
<div style="left:7px;top:433px;width:22px;height:1px;background:#dcdcdc;"></div>
<div class="t" style="left:18.5px;top:418.58px;font-size:12.4px;font-weight:normal;color:#444444;transform:translateX(-50%) scaleX(0.82);transform-origin:50% 0;will-change:transform;">25</div>
<div style="left:7px;top:448px;width:22px;height:1px;background:#dcdcdc;"></div>
<div class="t" style="left:18.5px;top:433.58px;font-size:12.4px;font-weight:normal;color:#444444;transform:translateX(-50%) scaleX(0.82);transform-origin:50% 0;will-change:transform;">26</div>
<div style="left:7px;top:463px;width:22px;height:1px;background:#dcdcdc;"></div>
<div class="t" style="left:18.5px;top:448.58px;font-size:12.4px;font-weight:normal;color:#444444;transform:translateX(-50%) scaleX(0.82);transform-origin:50% 0;will-change:transform;">27</div>
<div style="left:7px;top:478px;width:22px;height:1px;background:#dcdcdc;"></div>
<div class="t" style="left:18.5px;top:463.58px;font-size:12.4px;font-weight:normal;color:#444444;transform:translateX(-50%) scaleX(0.82);transform-origin:50% 0;will-change:transform;">28</div>
<div style="left:7px;top:493px;width:22px;height:1px;background:#dcdcdc;"></div>
<div class="t" style="left:18.5px;top:478.58px;font-size:12.4px;font-weight:normal;color:#444444;transform:translateX(-50%) scaleX(0.82);transform-origin:50% 0;will-change:transform;">29</div>
<div style="left:7px;top:508px;width:22px;height:1px;background:#dcdcdc;"></div>
<div class="t" style="left:18.5px;top:493.58px;font-size:12.4px;font-weight:normal;color:#444444;transform:translateX(-50%) scaleX(0.82);transform-origin:50% 0;will-change:transform;">30</div>
<div style="left:7px;top:523px;width:22px;height:1px;background:#dcdcdc;"></div>
<div class="t" style="left:18.5px;top:508.58px;font-size:12.4px;font-weight:normal;color:#444444;transform:translateX(-50%) scaleX(0.82);transform-origin:50% 0;will-change:transform;">31</div>
<div style="left:7px;top:538px;width:22px;height:1px;background:#dcdcdc;"></div>
<div class="t" style="left:18.5px;top:523.58px;font-size:12.4px;font-weight:normal;color:#444444;transform:translateX(-50%) scaleX(0.82);transform-origin:50% 0;will-change:transform;">32</div>
<div style="left:7px;top:553px;width:22px;height:1px;background:#dcdcdc;"></div>
<div class="t" style="left:18.5px;top:538.58px;font-size:12.4px;font-weight:normal;color:#444444;transform:translateX(-50%) scaleX(0.82);transform-origin:50% 0;will-change:transform;">33</div>
<div style="left:7px;top:568px;width:22px;height:1px;background:#dcdcdc;"></div>
<div class="t" style="left:18.5px;top:553.58px;font-size:12.4px;font-weight:normal;color:#444444;transform:translateX(-50%) scaleX(0.82);transform-origin:50% 0;will-change:transform;">34</div>
<div style="left:7px;top:583px;width:22px;height:1px;background:#dcdcdc;"></div>
<div class="t" style="left:18.5px;top:568.58px;font-size:12.4px;font-weight:normal;color:#444444;transform:translateX(-50%) scaleX(0.82);transform-origin:50% 0;will-change:transform;">35</div>
<div style="left:7px;top:609px;width:22px;height:1px;background:#dcdcdc;"></div>
<div class="t" style="left:18.5px;top:594.58px;font-size:12.4px;font-weight:normal;color:#444444;transform:translateX(-50%) scaleX(0.82);transform-origin:50% 0;will-change:transform;">36</div>
<div style="left:7px;top:624px;width:22px;height:1px;background:#dcdcdc;"></div>
<div class="t" style="left:18.5px;top:609.58px;font-size:12.4px;font-weight:normal;color:#444444;transform:translateX(-50%) scaleX(0.82);transform-origin:50% 0;will-change:transform;">37</div>
<div style="left:7px;top:639px;width:22px;height:1px;background:#dcdcdc;"></div>
<div class="t" style="left:18.5px;top:624.58px;font-size:12.4px;font-weight:normal;color:#444444;transform:translateX(-50%) scaleX(0.82);transform-origin:50% 0;will-change:transform;">38</div>
<div style="left:7px;top:654px;width:22px;height:1px;background:#dcdcdc;"></div>
<div class="t" style="left:18.5px;top:639.58px;font-size:12.4px;font-weight:normal;color:#444444;transform:translateX(-50%) scaleX(0.82);transform-origin:50% 0;will-change:transform;">39</div>
<div style="left:7px;top:669px;width:22px;height:1px;background:#dcdcdc;"></div>
<div class="t" style="left:18.5px;top:654.58px;font-size:12.4px;font-weight:normal;color:#444444;transform:translateX(-50%) scaleX(0.82);transform-origin:50% 0;will-change:transform;">40</div>
<div style="left:7px;top:684px;width:22px;height:1px;background:#dcdcdc;"></div>
<div class="t" style="left:18.5px;top:669.58px;font-size:12.4px;font-weight:normal;color:#444444;transform:translateX(-50%) scaleX(0.82);transform-origin:50% 0;will-change:transform;">41</div>
<div style="left:7px;top:699px;width:22px;height:1px;background:#dcdcdc;"></div>
<div class="t" style="left:18.5px;top:684.58px;font-size:12.4px;font-weight:normal;color:#444444;transform:translateX(-50%) scaleX(0.82);transform-origin:50% 0;will-change:transform;">42</div>
<div style="left:7px;top:714px;width:22px;height:1px;background:#dcdcdc;"></div>
<div class="t" style="left:18.5px;top:699.58px;font-size:12.4px;font-weight:normal;color:#444444;transform:translateX(-50%) scaleX(0.82);transform-origin:50% 0;will-change:transform;">43</div>
<div style="left:7px;top:0px;width:22px;height:8px;background:#efefef;"></div>
<div style="left:19px;top:0;width:0;height:0;border-left:7px solid transparent;border-bottom:5px solid #dedede;"></div>
<div style="left:77px;top:0px;width:2px;height:695px;background:#959595;"></div>
<div style="left:7px;top:178px;width:1446px;height:2px;background:#959595;"></div>
<div style="left:0px;top:0px;width:7px;height:695px;background:#000000;"></div>
<div style="left:27px;top:6px;width:23px;height:3px;background:#217346;"></div>
<div style="left:27px;top:6px;width:3px;height:20px;background:#217346;"></div>
<div style="left:27px;top:23px;width:15px;height:3px;background:#217346;"></div>
<div style="left:47px;top:6px;width:3px;height:12px;background:#217346;"></div>
<div style="left:42px;top:18px;width:9px;height:9px;background:#ffffff;"></div>
<div style="left:43px;top:19px;width:8px;height:8px;background:#217346;"></div>
<div style="left:27px;top:6px;width:2px;height:1px;background:#efefef;"></div>
<div style="left:27px;top:7px;width:1px;height:1px;background:#efefef;"></div>
</body></html>
